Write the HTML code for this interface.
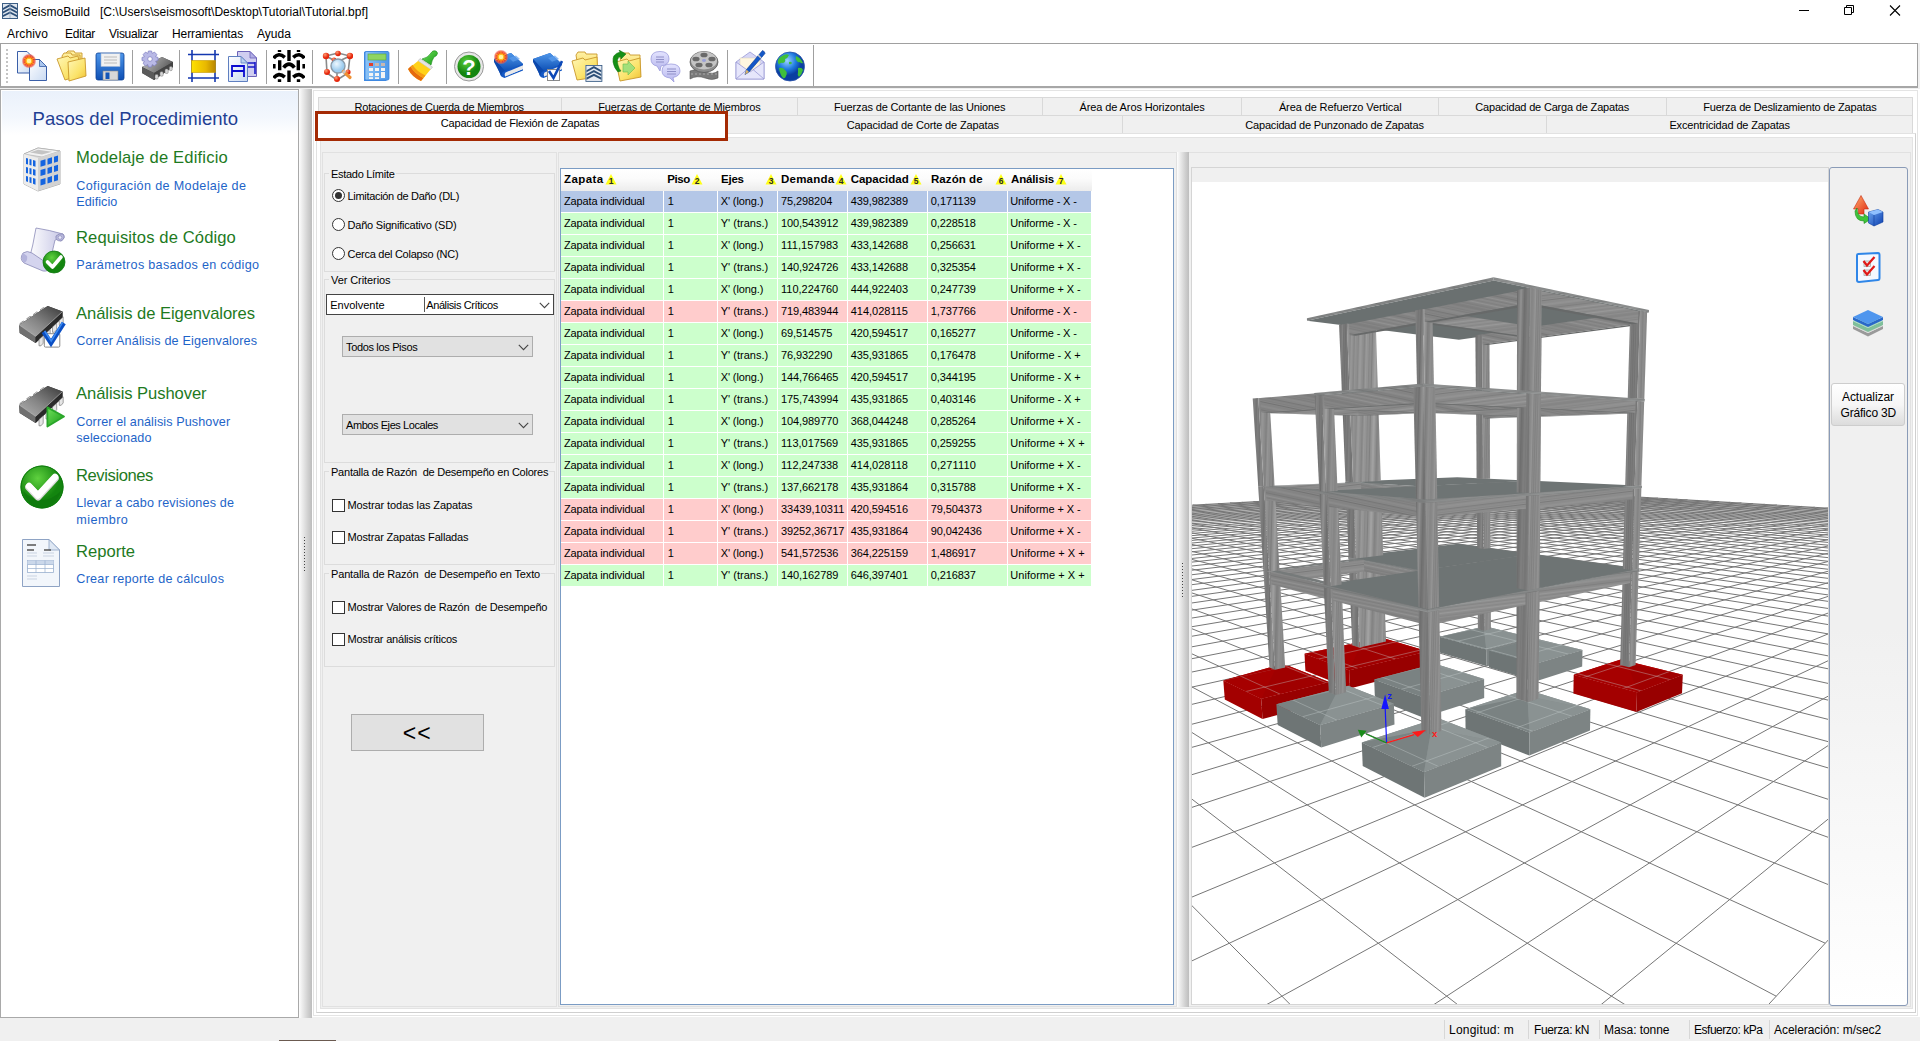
<!DOCTYPE html>
<html lang="es">
<head>
<meta charset="utf-8">
<title>SeismoBuild</title>
<style>
*{box-sizing:border-box;margin:0;padding:0}
html,body{width:1920px;height:1041px;overflow:hidden;background:#f0f0f0}
body{position:relative;font-family:"Liberation Sans",sans-serif;font-size:11px;color:#000}
.abs{position:absolute}
.t{position:absolute;white-space:nowrap;line-height:1}
/* title + menu */
#title{left:0;top:0;width:1920px;height:22px;background:#fff}
#menu{left:0;top:22px;width:1920px;height:21px;background:#fff}
.tt{font-size:12px;top:6px}
.mi{font-size:12px;top:5.5px}
/* toolbar */
#tb{left:0;top:43px;width:1918px;height:45px;background:#fff;border:1px solid #a0a0a0;border-bottom:2px solid #a7a7a7}
.sep{position:absolute;top:6px;width:1px;height:34px;background:#a0a0a0}
/* left panel */
#lp{left:0;top:89px;width:299px;height:929px;background:#fff;border:1px solid #a9a9a9}
#lphead{left:1px;top:1px;width:296px;height:44px;background:linear-gradient(180deg,#eaf1fb 0%,#f3f7fd 60%,#ffffff 100%)}
.h1{font-size:18.5px;color:#1f3f93;left:32px}
.st{font-size:16.6px;color:#1e7a1e;left:76px}
.ss{font-size:12.6px;color:#1e64c8;left:76px;letter-spacing:.35px}
/* splitters */
.spl{background:linear-gradient(90deg,#fdfdfd 0%,#e6e6e6 35%,#cfcfcf 70%,#bdbdbd 100%)}
/* tabs */
.tab{position:absolute;height:18px;border:1px solid #d9d9d9;border-bottom:none;background:#f0f0f0;text-align:center;font-size:11px;line-height:17px;white-space:nowrap}
.gb{position:absolute;border:1px solid #dcdcdc}
.gbl{position:absolute;background:#f0f0f0;padding:0 2px;white-space:nowrap;line-height:1;font-size:11px}
.rad{position:absolute;width:13px;height:13px;border:1px solid #333;border-radius:50%;background:#fff}
.rad.on:after{content:"";position:absolute;left:2px;top:2px;width:7px;height:7px;border-radius:50%;background:#333}
.chk{position:absolute;width:13px;height:13px;border:1px solid #333;background:#fff}
.combo{position:absolute;border:1px solid #adadad;background:#e1e1e1;font-size:11px;line-height:19px;padding-left:3px;white-space:nowrap}
.chev{position:absolute;right:5px;top:5px;width:10px;height:8px}
/* table */
#grid{left:560px;top:168px;width:614px;height:837px;background:#fff;border:1px solid #7f9db9}
.row{position:absolute;left:1px;height:22px;width:530px}
.c{position:absolute;top:0;height:21px;line-height:21px;font-size:11px;white-space:nowrap;padding-left:3px;overflow:hidden}
.g .c{background:#ccffcc}.r .c{background:#ffcccc}.b .c{background:#b4c7e7}
.hd .c{background:none;font-weight:bold;font-size:11.5px;line-height:22px}
.c1{left:0;width:102px}.c2{left:103px;width:53px}.c3{left:157px;width:59px}.c4{left:217px;width:69px}.c5{left:287px;width:79px}.c6{left:367px;width:79px}.c7{left:447px;width:83px}
.srt{position:absolute;top:6px;width:0;height:0;border-left:6px solid transparent;border-right:6px solid transparent;border-bottom:11px solid #ffff33}
.srn{position:absolute;top:7px;font-size:9px;font-weight:bold;line-height:10px;color:#333}
/* status */
.sbsep{position:absolute;top:1021px;width:1px;height:18px;background:#d0d0d0}
.sbt{font-size:12px;top:1024px}
</style>
</head>
<body>
<!-- TITLE BAR -->
<div id="title" class="abs">
<svg class="abs" style="left:2px;top:3px" width="16" height="16" viewBox="0 0 16 16"><rect x="0" y="0" width="16" height="16" fill="#dfe6ee"/><rect x=".5" y=".5" width="15" height="15" fill="none" stroke="#3d5f86"/><path d="M1 5 L8 1 L15 5 V7 L8 3.2 L1 7Z M1 8.5 L8 4.8 L15 8.5 V10.5 L8 6.8 L1 10.5Z M1 12 L8 8.4 L15 12 V14 L8 10.4 L1 14Z" fill="#2d4f78"/><path d="M8 1 V15" stroke="#8fa6c0" stroke-width=".8"/></svg>
<span class="t tt" style="left:23px;letter-spacing:.02px">SeismoBuild &nbsp;&nbsp;[C:\Users\seismosoft\Desktop\Tutorial\Tutorial.bpf]</span>
<svg class="abs" style="left:1790px;top:0" width="130" height="22" viewBox="0 0 130 22" fill="none" stroke="#000" stroke-width="1"><path d="M9 10.5 H19"/><path d="M54.5 7.5 H61.5 V14.5 H54.5Z M56.5 7.5 V5.5 H63.5 V12.5 H61.5"/><path d="M100 5.5 L110 15.5 M110 5.5 L100 15.5" stroke-width="1.1"/></svg>
</div>
<!-- MENU -->
<div id="menu" class="abs">
<span class="t mi" style="left:7px;letter-spacing:.14px">Archivo</span>
<span class="t mi" style="left:65px;letter-spacing:-.2px">Editar</span>
<span class="t mi" style="left:109px;letter-spacing:-.28px">Visualizar</span>
<span class="t mi" style="left:172px;letter-spacing:-.08px">Herramientas</span>
<span class="t mi" style="left:257px;letter-spacing:.04px">Ayuda</span>
</div>
<!-- TOOLBAR -->
<div id="tb" class="abs">
<div class="abs" style="left:5px;top:5px;width:2px;height:34px;background:repeating-linear-gradient(180deg,#c4c4c4 0 2px,#fff 2px 4px)"></div>
<div class="sep" style="left:131px"></div><div class="sep" style="left:178px"></div><div class="sep" style="left:265px"></div><div class="sep" style="left:311px"></div><div class="sep" style="left:397px"></div><div class="sep" style="left:445px"></div><div class="sep" style="left:726px"></div>
<div class="abs" style="left:812px;top:1px;width:1px;height:41px;background:#a0a0a0"></div>
<!--ICONS-START--><svg width="0" height="0" style="position:absolute"><defs>
<linearGradient id="gFold" x1="0" y1="0" x2="1" y2="1"><stop offset="0" stop-color="#fff7b8"/><stop offset=".6" stop-color="#fbe36a"/><stop offset="1" stop-color="#efc030"/></linearGradient>
<linearGradient id="gFold2" x1="0" y1="0" x2="0" y2="1"><stop offset="0" stop-color="#fff2a6"/><stop offset="1" stop-color="#f5cf48"/></linearGradient>
<linearGradient id="gPage" x1="0" y1="0" x2="1" y2="1"><stop offset="0" stop-color="#ffffff"/><stop offset="1" stop-color="#c9daf2"/></linearGradient>
<linearGradient id="gBlue" x1="0" y1="0" x2="0" y2="1"><stop offset="0" stop-color="#4f97ea"/><stop offset="1" stop-color="#0d4fb4"/></linearGradient>
<linearGradient id="gChip" x1="0" y1="0" x2="1" y2="0.4"><stop offset="0" stop-color="#c4c4c4"/><stop offset=".55" stop-color="#8e8e8e"/><stop offset="1" stop-color="#5c5c5c"/></linearGradient>
<linearGradient id="gGold" x1="0" y1="0" x2="1" y2="0"><stop offset="0" stop-color="#ffe100"/><stop offset=".6" stop-color="#e8b800"/><stop offset="1" stop-color="#b88600"/></linearGradient>
<radialGradient id="gStar"><stop offset="0" stop-color="#ff5a2a"/><stop offset=".55" stop-color="#f2331c"/><stop offset=".8" stop-color="#f04a3a" stop-opacity=".75"/><stop offset="1" stop-color="#f0786a" stop-opacity="0"/></radialGradient>
<radialGradient id="gBall" cx=".35" cy=".3"><stop offset="0" stop-color="#ff9a70"/><stop offset="1" stop-color="#e5260c"/></radialGradient>
<radialGradient id="gLens" cx=".4" cy=".35"><stop offset="0" stop-color="#eef8ff"/><stop offset="1" stop-color="#9ccbee"/></radialGradient>
<radialGradient id="gGreen" cx=".4" cy=".3"><stop offset="0" stop-color="#5fd13f"/><stop offset="1" stop-color="#13850f"/></radialGradient>
<radialGradient id="gGlobe" cx=".4" cy=".3"><stop offset="0" stop-color="#9fd4ff"/><stop offset=".6" stop-color="#1f7be0"/><stop offset="1" stop-color="#0a3fa0"/></radialGradient>
<linearGradient id="gCalc" x1="0" y1="0" x2="1" y2="0"><stop offset="0" stop-color="#8cc4f7"/><stop offset="1" stop-color="#4e98ea"/></linearGradient>
<linearGradient id="gBub" x1="0" y1="0" x2="0" y2="1"><stop offset="0" stop-color="#e4e4ff"/><stop offset="1" stop-color="#b4b4ec"/></linearGradient>
<linearGradient id="gGrn2" x1="0" y1="0" x2="1" y2="1"><stop offset="0" stop-color="#6fe05a"/><stop offset="1" stop-color="#179a17"/></linearGradient>
</defs></svg>
<svg class="abs" style="left:15px;top:6px" width="32" height="32" viewBox="0 0 32 32"><path d="M1.5 1.5 H11 L17 7.5 V23 H1.5Z" fill="url(#gPage)" stroke="#3a5fa8"/><path d="M13.5 9.5 H23.5 L30.5 16.5 V30.5 H13.5Z" fill="url(#gPage)" stroke="#3a5fa8"/><path d="M23.5 9.5 V16.5 H30.5Z" fill="#a9c6ee" stroke="#3a5fa8" stroke-width=".8"/><circle cx="13" cy="11" r="7.5" fill="url(#gStar)"/><polygon points="13.00,4.10 13.70,8.39 15.93,5.93 14.91,9.09 18.98,7.55 15.61,10.30 18.85,11.00 15.61,11.70 18.98,14.45 14.91,12.91 15.93,16.07 13.70,13.61 13.00,17.90 12.30,13.61 10.08,16.07 11.09,12.91 7.02,14.45 10.39,11.70 7.15,11.00 10.39,10.30 7.02,7.55 11.09,9.09 10.07,5.93 12.30,8.39" fill="#ffc21a"/><circle cx="13" cy="11" r="2.25" fill="#fff4a0"/></svg>
<svg class="abs" style="left:55px;top:6px" width="32" height="32" viewBox="0 0 32 32"><path d="M10 3 L12 1 H18 L19 3 H26 V20 H12Z" fill="url(#gFold2)" stroke="#c9972a" stroke-width=".9"/><path d="M6 6 L8 3 H15 L16 5 H24 V22 H9Z" fill="url(#gFold2)" stroke="#c9972a" stroke-width=".9"/><path d="M1 9 L12 6 L14 8 L22 6 L26 25 L9 30Z" fill="url(#gFold)" stroke="#c9972a" stroke-width=".9"/><path d="M12 12 L29 8 L30 26 L13 31Z" fill="url(#gFold)" stroke="#c9972a" stroke-width=".9"/></svg>
<svg class="abs" style="left:93px;top:6px" width="32" height="32" viewBox="0 0 32 32"><path d="M2 5 Q2 3 4 3 H28 Q30 3 30 5 V28 Q30 30 28 30 H4 Q2 30 2 28Z" fill="url(#gBlue)" stroke="#0b3f94" stroke-width=".8"/><rect x="7" y="3.5" width="19" height="13" fill="#f1f1f1" stroke="#9fb4d6" stroke-width=".6"/><path d="M10 7 H23 M10 10 H23 M10 13 H23" stroke="#bcbcbc" stroke-width="1.2"/><rect x="9" y="21" width="15" height="9" fill="#d8d8d8" stroke="#8a8a8a" stroke-width=".6"/><rect x="11.5" y="22.5" width="4" height="6.5" fill="#1456b8"/></svg>
<svg class="abs" style="left:140px;top:6px" width="32" height="32" viewBox="0 0 32 32"><path d="M1 17 L21 7 L32 12 L32 17 L13 30 L1 23Z" fill="#4a4a4a"/><path d="M1 17 L21 7 L32 12 L13 23Z" fill="url(#gChip)"/><path d="M13 23 L32 12 V17 L13 30Z" fill="#444"/><path d="M1 17 L13 23 V30 L1 23Z" fill="#5a5a5a"/><g fill="#d6d6d6" stroke="#777" stroke-width=".5"><rect x="14" y="24.5" width="3.2" height="4.5" rx="1.2"/><rect x="19" y="21.7" width="3.2" height="4.5" rx="1.2"/><rect x="24" y="19" width="3.2" height="4.5" rx="1.2"/><rect x="28.4" y="16.5" width="2.8" height="4.2" rx="1.2"/></g><g transform="translate(9,9)"><path d="M-1.6 -8 H1.6 L2.2 -5.6 L4.5 -6.9 L6.9 -4.5 L5.6 -2.2 L8 -1.6 V1.6 L5.6 2.2 L6.9 4.5 L4.5 6.9 L2.2 5.6 L1.6 8 H-1.6 L-2.2 5.6 L-4.5 6.9 L-6.9 4.5 L-5.6 2.2 L-8 1.6 V-1.6 L-5.6 -2.2 L-6.9 -4.5 L-4.5 -6.9 L-2.2 -5.6Z" fill="#b9b9e6" stroke="#7c7cc0" stroke-width=".7"/><circle r="2.3" fill="#fff" stroke="#7c7cc0" stroke-width=".7"/></g></svg>
<svg class="abs" style="left:187px;top:6px" width="32" height="32" viewBox="0 0 32 32"><path d="M4 0 V32 M27 0 V32 M0 4.5 H31 M0 28 H31" stroke="#1438b0" stroke-width="1.6" fill="none"/><rect x="3.5" y="10.5" width="24" height="12" fill="url(#gGold)" stroke="#c79a00" stroke-width=".6"/></svg>
<svg class="abs" style="left:226px;top:6px" width="32" height="32" viewBox="0 0 32 32"><path d="M10.5 1.5 H23 L29.5 8 V26.5 H10.5Z" fill="#cfcdf0" stroke="#6d63b8"/><path d="M23 1.5 V8 H29.5Z" fill="#b1aee6" stroke="#6d63b8" stroke-width=".8"/><path d="M20 12 V24 M28 12 V24 M20 13 H28 M20 17 H28" stroke="#1a1ac8" stroke-width="1.6" fill="none"/><path d="M1.5 6.5 H14 L20.5 13 V31.5 H1.5Z" fill="url(#gPage)" stroke="#5f7fc0"/><path d="M14 6.5 V13 H20.5Z" fill="#b7cff0" stroke="#5f7fc0" stroke-width=".8"/><path d="M5 15 V27 M17 15 V27 M5 16 H17 M5 21 H17" stroke="#0a0ad0" stroke-width="1.8" fill="none"/></svg>
<svg class="abs" style="left:272px;top:6px" width="32" height="32" viewBox="0 0 32 32"><g fill="none" stroke="#000" stroke-width="3.4"><path d="M16 0 V11 M16 20.5 V32 M6.7 10.3 V20.2 M25.3 10.3 V20.2"/><path d="M6.5 0 V2.1 M25.5 0 V2.1 M6.5 29.3 V32 M25.5 29.3 V32"/><path d="M0.6 8.2 Q5.5 1.8 11.8 7.4 M20.2 7.4 Q26.5 1.8 31.4 8.2 M10.6 17.6 Q16 10.6 21.4 17.6 M0.6 28 Q5.5 21.6 11.8 27.2 M20.2 27.2 Q26.5 21.6 31.4 28" stroke-width="3.6"/><path d="M1.3 14 V18.6 M30.7 14 V18.6" stroke-width="2.6"/></g></svg>
<svg class="abs" style="left:320px;top:6px" width="32" height="32" viewBox="0 0 32 32"><g stroke="#8a8a8a" stroke-width="1.6" fill="none"><path d="M5 6 L17 3 L29 6 L27 23 L16 30 L6 23Z M5 6 L16 12 L29 6 M16 12 V30"/></g><g fill="url(#gBall)"><circle cx="5" cy="6" r="3.2"/><circle cx="17" cy="3.5" r="2.8"/><circle cx="29" cy="6" r="3.2"/><circle cx="6" cy="22" r="3"/><circle cx="27" cy="22" r="2.6"/><circle cx="16" cy="29" r="3"/><circle cx="13" cy="10" r="2.4"/></g><circle cx="17" cy="16" r="7" fill="url(#gLens)" stroke="#8b9aa8" stroke-width="1.4"/><path d="M22.5 21.5 L29 27.5" stroke="#f09030" stroke-width="3.2" stroke-linecap="round"/><path d="M22 21 L24 23" stroke="#c8c8c8" stroke-width="3.2"/></svg>
<svg class="abs" style="left:359px;top:6px" width="32" height="32" viewBox="0 0 32 32"><path d="M4 2 L6 1 H28 V29 L26 31 H4Z" fill="#3f8be4"/><rect x="5" y="1.5" width="24" height="28.5" rx="1.5" fill="url(#gCalc)" stroke="#3f86dc" stroke-width=".8"/><rect x="8" y="4" width="18" height="6" fill="#8fd562" stroke="#5aa838" stroke-width=".6"/><g fill="#f4f4f4"><rect x="9" y="13" width="4" height="3" fill="#e0402c"/><rect x="15" y="13" width="4" height="3" fill="#c8b8b0"/><rect x="21" y="13" width="4" height="3" fill="#c8b8b0"/><rect x="9" y="18" width="4" height="3"/><rect x="15" y="18" width="4" height="3"/><rect x="21" y="18" width="4" height="3"/><rect x="9" y="23" width="4" height="3"/><rect x="15" y="23" width="4" height="3"/><rect x="21" y="22" width="4" height="6"/><rect x="9" y="27.2" width="4" height="1.8"/><rect x="15" y="27.2" width="4" height="1.8"/></g></svg>
<svg class="abs" style="left:406px;top:6px" width="32" height="32" viewBox="0 0 32 32"><path d="M26 1 Q30 0 30.5 3.5 Q30 6 27 7 Q25 10 24 15 L15 9 Q21 8 24 3 Q25 1.5 26 1Z" fill="url(#gGrn2)" stroke="#138a13" stroke-width=".6"/><path d="M13 8.5 L25.5 17 L23.5 19.5 L11 11Z" fill="#e4e4e4" stroke="#a8a8a8" stroke-width=".5"/><path d="M11 11 L23.5 19.5 L14 31 Q5 27 1 19Z" fill="#ffd21a"/><path d="M1 19 L3.5 16.5 Q8 24 16.5 28 L14 31 Q5 27 1 19Z" fill="#e56a10"/><path d="M3.5 16.5 L5.5 14.8 Q10 22 18.5 25.5 L16.5 28 Q8 24 3.5 16.5Z" fill="#f59a14"/></svg>
<svg class="abs" style="left:452px;top:6px" width="32" height="32" viewBox="0 0 32 32"><circle cx="16" cy="16.5" r="14.5" fill="#e6e6e6" stroke="#9a9a9a" stroke-width="1"/><circle cx="16" cy="16.5" r="11.5" fill="url(#gGreen)"/><text x="16" y="24.5" text-anchor="middle" font-family="Liberation Sans, sans-serif" font-weight="bold" font-size="22" fill="#fff">?</text></svg>
<svg class="abs" style="left:491px;top:6px" width="32" height="32" viewBox="0 0 32 32"><path d="M2 9 L19 3 L31 14 L31 17 L13 27 L9 26Z" fill="#0f52c0"/><path d="M2 9 L19 3 L31 14 L13 21Z" fill="url(#gBlue)"/><path d="M13 21 L31 14 V15 L14 22.5 Q11.5 24 13 26.5 L31 19 V20.5 L12.5 28 Q7 27 9 21Z" fill="#1458c4"/><path d="M13.5 22.5 L31 15.2 V19 L13.2 26.4 Q12 24 13.5 22.5Z" fill="#e9e9e9"/><path d="M2 9 L13 21 Q9 22 9.5 26 L2 12Z" fill="#0c48ac"/><path d="M17 8 L24 5.5 L28 9 L21 11.8Z" fill="#5fa0ee" opacity=".7"/><circle cx="9" cy="7" r="7.5" fill="url(#gStar)"/><polygon points="9.00,0.10 9.70,4.39 11.93,1.93 10.91,5.09 14.98,3.55 11.61,6.30 14.85,7.00 11.61,7.70 14.98,10.45 10.91,8.91 11.93,12.07 9.70,9.61 9.00,13.90 8.30,9.61 6.08,12.07 7.09,8.91 3.02,10.45 6.39,7.70 3.15,7.00 6.39,6.30 3.02,3.55 7.09,5.09 6.07,1.93 8.30,4.39" fill="#ffc21a"/><circle cx="9" cy="7" r="2.25" fill="#fff4a0"/></svg>
<svg class="abs" style="left:530px;top:6px" width="32" height="32" viewBox="0 0 32 32"><path d="M2 9 L19 3 L31 14 L31 17 L13 27 L9 26Z" fill="#0f52c0"/><path d="M2 9 L19 3 L31 14 L13 21Z" fill="url(#gBlue)"/><path d="M13 21 L31 14 V15 L14 22.5 Q11.5 24 13 26.5 L31 19 V20.5 L12.5 28 Q7 27 9 21Z" fill="#1458c4"/><path d="M13.5 22.5 L31 15.2 V19 L13.2 26.4 Q12 24 13.5 22.5Z" fill="#e9e9e9"/><path d="M2 9 L13 21 Q9 22 9.5 26 L2 12Z" fill="#0c48ac"/><path d="M17 8 L24 5.5 L28 9 L21 11.8Z" fill="#5fa0ee" opacity=".7"/><rect x="16.5" y="19.5" width="12" height="11" fill="#fff" stroke="#8a8a8a"/><path d="M18 21 L22.5 28 L31 11" stroke="#0d49b8" stroke-width="2.6" fill="none"/></svg>
<svg class="abs" style="left:570px;top:6px" width="32" height="32" viewBox="0 0 32 32"><path d="M5 5 L7 2 H14 L15 4 H26 V24 H8Z" fill="url(#gFold2)" stroke="#c9972a" stroke-width=".9"/><path d="M1 11 L12 8 L14 10 L26 7 L27 27 L6 30Z" fill="url(#gFold)" stroke="#c9972a" stroke-width=".9"/><g transform="translate(14.5,15) scale(1.05)"><rect x="0" y="0" width="16" height="16" fill="#e6ebf2"/><rect x=".4" y=".4" width="15.2" height="15.2" fill="none" stroke="#365a84" stroke-width=".8"/><path d="M1 5 L8 1 L15 5 V7 L8 3.2 L1 7Z M1 8.5 L8 4.8 L15 8.5 V10.5 L8 6.8 L1 10.5Z M1 12 L8 8.4 L15 12 V14 L8 10.4 L1 14Z" fill="#2d4f78"/></g></svg>
<svg class="abs" style="left:610px;top:6px" width="32" height="32" viewBox="0 0 32 32"><path d="M9 6 L11 3 H18 L19 5 H29 V25 H11Z" fill="url(#gFold2)" stroke="#c9972a" stroke-width=".9"/><path d="M5 12 L16 9 L18 11 L29 8 L30 27 L9 31Z" fill="url(#gFold)" stroke="#c9972a" stroke-width=".9"/><path d="M12 14 L17 14 V11 L24 18 L17 25 V22 H12Z" fill="#9adf7a" stroke="#5db848" stroke-width=".6" opacity=".9"/><path d="M2 12 Q1 4 9 2 L8 0 L15 4 L10 9 L9.5 6.5 Q5 8 7 15 Q8 19 10 21 L7 22 Q3 18 2 12Z" fill="#169016" stroke="#0e6e0e" stroke-width=".5"/></svg>
<svg class="abs" style="left:648px;top:6px" width="32" height="32" viewBox="0 0 32 32"><path d="M2 9 Q2 1.5 11 1.5 Q20 1.5 20 9 Q20 15 12 16 L11 21 L8 16 Q2 15 2 9Z" fill="url(#gBub)" stroke="#9c9cdc" stroke-width=".8"/><path d="M7 7 H15 M7 9.5 H15 M7 12 H15" stroke="#9090c8" stroke-width="1"/><path d="M13 21 Q13 14 22 14 Q31 14 31 21 Q31 26 24 27.5 L25 32 L21 28 Q13 27 13 21Z" fill="url(#gBub)" stroke="#9c9cdc" stroke-width=".8"/><path d="M18 19 H27 M18 21.5 H27 M18 24 H27" stroke="#9090c8" stroke-width="1"/></svg>
<svg class="abs" style="left:687px;top:6px" width="32" height="32" viewBox="0 0 32 32"><path d="M2 21 Q10 18 18 22 Q25 25 30 21 L30 28 Q24 31 17 28 Q9 25 2 29Z" fill="#7a7a7a" stroke="#555" stroke-width=".6"/><path d="M3 24 L29 24" stroke="#aaa" stroke-width="1" stroke-dasharray="2 2"/><ellipse cx="16" cy="12" rx="14" ry="10.5" fill="#8d8d8d" stroke="#5a5a5a" stroke-width=".8"/><ellipse cx="16" cy="10.5" rx="13" ry="9" fill="#c4c4c4"/><g fill="#6a6a6a"><ellipse cx="16" cy="5" rx="3.6" ry="2.3"/><ellipse cx="8" cy="9" rx="3.6" ry="2.3"/><ellipse cx="24" cy="9" rx="3.6" ry="2.3"/><ellipse cx="11" cy="15" rx="3.6" ry="2.3"/><ellipse cx="21" cy="15" rx="3.6" ry="2.3"/></g><ellipse cx="16" cy="10.5" rx="2" ry="1.4" fill="#9aa0d8"/></svg>
<svg class="abs" style="left:733px;top:6px" width="32" height="32" viewBox="0 0 32 32"><path d="M2 12 L16 2 L30 12 V29 H2Z" fill="#d6d6f6" stroke="#9a9ad6" stroke-width=".8"/><rect x="6" y="8" width="20" height="14" fill="#fff7e0" stroke="#d8d0b8" stroke-width=".5"/><path d="M2 12 L16 22 L30 12 V29 H2Z" fill="#e6e6fb" stroke="#9a9ad6" stroke-width=".8"/><path d="M2 29 L13 19.5 M30 29 L19 19.5" stroke="#9a9ad6" stroke-width=".8"/><path d="M28.5 0.5 Q31 1.5 31 3.5 L15 22 L11 24.5 L12.5 19.5Z" fill="#1458c8" stroke="#0a3a90" stroke-width=".6"/><path d="M12.5 19.5 L15 22 L11 24.5Z" fill="#d9b26a"/><path d="M24 5 L27 8" stroke="#c8c8c8" stroke-width="1.6"/></svg>
<svg class="abs" style="left:773px;top:6px" width="32" height="32" viewBox="0 0 32 32"><circle cx="16" cy="16.5" r="14.5" fill="url(#gGlobe)" stroke="#2850a8" stroke-width=".8"/><path d="M8 6 Q12 3 15 5 Q14 8 11 9 Q12 12 9 13 Q6 12 5 15 Q3 12 4 10 Q5 7 8 6Z M5 18 Q9 17 11 20 Q14 22 12 26 Q11 29 9 28 Q6 25 5 18Z M22 6 Q27 8 29 13 Q27 14 26 12 Q24 13 23 11 Q21 10 22 6Z M24 18 Q28 17 29 20 Q28 24 25 27 Q23 25 24 22Z M15 12 Q17 11 18 13 Q17 15 15 14Z" fill="#3fbf3a"/></svg><!--ICONS-END-->
</div>
<!-- LEFT PANEL -->
<div id="lp" class="abs"><div id="lphead" class="abs"></div></div>
<span class="t h1" style="left:32.5px;top:110.2px;letter-spacing:0.04px">Pasos del Procedimiento</span>
<span class="t st" style="left:76px;top:149.8px;letter-spacing:0.17px">Modelaje de Edificio</span>
<span class="t ss" style="left:76.3px;top:179.5px;letter-spacing:0.36px">Cofiguración de Modelaje de</span>
<span class="t ss" style="left:76.3px;top:196.0px;letter-spacing:0.05px">Edificio</span>
<span class="t st" style="left:76px;top:229.8px;letter-spacing:0.11px">Requisitos de Código</span>
<span class="t ss" style="left:76.3px;top:258.8px;letter-spacing:0.31px">Parámetros basados en código</span>
<span class="t st" style="left:76px;top:305.5px;letter-spacing:-0.08px">Análisis de Eigenvalores</span>
<span class="t ss" style="left:76.3px;top:335.2px;letter-spacing:0.17px">Correr Análisis de Eigenvalores</span>
<span class="t st" style="left:76px;top:385.8px;letter-spacing:-0.08px">Análisis Pushover</span>
<span class="t ss" style="left:76.3px;top:415.5px;letter-spacing:0.10px">Correr el análisis Pushover</span>
<span class="t ss" style="left:76.3px;top:432.2px;letter-spacing:0.15px">seleccionado</span>
<span class="t st" style="left:76px;top:467.8px;letter-spacing:-0.42px">Revisiones</span>
<span class="t ss" style="left:76.3px;top:497.2px;letter-spacing:0.17px">Llevar a cabo revisiones de</span>
<span class="t ss" style="left:76.3px;top:514.2px;letter-spacing:0.43px">miembro</span>
<span class="t st" style="left:76px;top:543.6px;letter-spacing:-0.01px">Reporte</span>
<span class="t ss" style="left:76.3px;top:573.2px;letter-spacing:0.26px">Crear reporte de cálculos</span>
<svg class="abs" style="left:22px;top:146px" width="40" height="46" viewBox="0 0 40 46"><path d="M2 8 L16 2 L38 5 L38 38 L16 45 L2 38Z" fill="#d9d9d9" stroke="#9a9a9a" stroke-width=".8"/><path d="M2 8 L16 2 L38 5 L20 11Z" fill="#f2f2f2" stroke="#aaa" stroke-width=".6"/><path d="M8 6.5 L16 3.8 L30 5.7 L20 8.5Z" fill="#c4c4c4"/><path d="M2 8 L16 12 V45 L2 38Z" fill="#ececec"/><path d="M16 12 L38 5 V38 L16 45Z" fill="#d2d2d2"/><g fill="#1464e0"><path d="M4 12 l2 .6 v6 l-2 -.7z M7.5 13 l2 .6 v6 l-2 -.7z M11 14 l2.5 .7 v6 l-2.5 -.8z"/><path d="M4 21 l2 .6 v6 l-2 -.7z M7.5 22 l2 .6 v6 l-2 -.7z M11 23 l2.500 .7 v6 l-2.500 -.8z"/><path d="M4 30 l2 .6 v5.5 l-2 -.9z M7.5 31 l2 .6 v5.700 l-2 -.9z M11 32 l2.500 .7 v6 l-2.500 -1z"/><path d="M18.500 14.800 l5 -1.500 v6 l-5 1.500z M25.500 12.700 l4.500 -1.400 v6 l-4.500 1.400z M32 10.800 l4 -1.200 v6 l-4 1.200z"/><path d="M18.500 24 l5 -1.500 v6 l-5 1.500z M25.500 22 l4.500 -1.400 v6 l-4.500 1.400z M32 20 l4 -1.200 v6 l-4 1.200z"/><path d="M18.500 33.500 l5 -1.500 v6 l-5 1.500z M25.500 31.500 l4.500 -1.400 v6 l-4.500 1.400z M32 29.500 l4 -1.200 v6 l-4 1.200z"/></g></svg>
<svg class="abs" style="left:19px;top:226px" width="48" height="48" viewBox="0 0 48 48"><defs><linearGradient id="gScr" x1="0" y1="0" x2="1" y2="0"><stop offset="0" stop-color="#ffffff"/><stop offset="1" stop-color="#c4c4e4"/></linearGradient></defs><path d="M17 2 Q30 4 44 8 Q47 12 42 15 Q38 12 36 14 L30 40 Q20 36 10 34 Q14 20 17 2Z" fill="url(#gScr)" stroke="#8a8ab8" stroke-width=".8"/><path d="M44 8 Q47 12 42 15 Q36 15 37 10 Q40 7 44 8Z" fill="#b8b8dc" stroke="#8a8ab8" stroke-width=".8"/><circle cx="41" cy="11.500" r="1.800" fill="#e8e8f8" stroke="#8a8ab8" stroke-width=".6"/><path d="M4 27 Q8 24 13 27 L32 40 Q30 46 24 45 L5 37 Q0 33 4 27Z" fill="#d4d4ee" stroke="#8a8ab8" stroke-width=".8"/><path d="M4 27 Q1 32 5 37 Q9 35 8 30Z" fill="#b4b4dc"/><circle cx="35" cy="36" r="11" fill="url(#gGreen)" stroke="#0f7a0f" stroke-width=".8"/><path d="M28.500 36 L33.500 41 L42 31" stroke="#fff" stroke-width="3.600" fill="none" stroke-linecap="round" stroke-linejoin="round"/></svg>
<svg class="abs" style="left:19px;top:306px" width="47" height="43" viewBox="0 0 47 43"><defs><linearGradient id="gChipT" x1="0" y1="1" x2="1" y2="0"><stop offset="0" stop-color="#b4b4b4"/><stop offset=".45" stop-color="#858585"/><stop offset="1" stop-color="#3a3a3a"/></linearGradient></defs><g fill="#cfcfcf" stroke="#6f6f6f" stroke-width=".6"><path d="M0.800 17.500 l3.400 -2.500 l1.800 .9 l-3.400 2.500z M7.600 12.800 l3.400 -2.500 l1.800 .9 l-3.400 2.500z M14.300 8.400 l3.400 -2.500 l1.800 .9 l-3.400 2.500z M21 4 l3.400 -2.500 l1.800 .9 l-3.400 2.500z"/></g><path d="M0.150 18.900 L28.700 0.100 L43.500 5.500 L43.500 11.500 L16.600 37.100 L0.700 27Z" fill="#2e2e2e"/><path d="M0.150 18.900 L28.700 0.100 L43.500 5.500 L16.600 30.400Z" fill="url(#gChipT)"/><path d="M0.150 18.900 L16.600 30.400 L16.600 37.100 L0.700 27Z" fill="#707070"/><path d="M16.600 30.400 L43.500 5.500 V11.500 L16.600 37.100Z" fill="#2a2a2a"/><path d="M0.150 18.900 L16.600 30.400 L43.500 5.500" fill="none" stroke="#bdbdbd" stroke-width=".7"/><g fill="#e6e6e6" stroke="#666" stroke-width=".6"><path d="M20 33.500 l4.200 -3.800 v7.500 l-2.200 2.600 h-2 z"/><path d="M27 27.200 l4.200 -3.800 v7 l-2.200 2.600 h-2 z"/><path d="M33.500 21 l4.200 -3.800 v6.500 l-2.200 2.600 h-2 z"/><path d="M40.200 14.500 l4 -3.600 v6 l-2 2.400 h-2 z"/></g><rect x="25.300" y="27.700" width="15.500" height="13.400" rx="1.200" fill="#fff" stroke="#8a8a8a"/><path d="M24.600 25.700 L32 37.100 L44.800 16.900" stroke="#0b4fc4" stroke-width="4.600" fill="none"/><path d="M25.600 25 L32.200 35 L43.600 16.300" stroke="#3b8af0" stroke-width="1.600" fill="none"/></svg>
<svg class="abs" style="left:19px;top:386px" width="47" height="43" viewBox="0 0 47 43"><defs><linearGradient id="gChipT" x1="0" y1="1" x2="1" y2="0"><stop offset="0" stop-color="#b4b4b4"/><stop offset=".45" stop-color="#858585"/><stop offset="1" stop-color="#3a3a3a"/></linearGradient></defs><g fill="#cfcfcf" stroke="#6f6f6f" stroke-width=".6"><path d="M0.800 17.500 l3.400 -2.500 l1.800 .9 l-3.400 2.500z M7.600 12.800 l3.400 -2.500 l1.800 .9 l-3.400 2.500z M14.300 8.400 l3.400 -2.500 l1.800 .9 l-3.400 2.500z M21 4 l3.400 -2.500 l1.800 .9 l-3.400 2.500z"/></g><path d="M0.150 18.900 L28.700 0.100 L43.500 5.500 L43.500 11.500 L16.600 37.100 L0.700 27Z" fill="#2e2e2e"/><path d="M0.150 18.900 L28.700 0.100 L43.500 5.500 L16.600 30.400Z" fill="url(#gChipT)"/><path d="M0.150 18.900 L16.600 30.400 L16.600 37.100 L0.700 27Z" fill="#707070"/><path d="M16.600 30.400 L43.500 5.500 V11.500 L16.600 37.100Z" fill="#2a2a2a"/><path d="M0.150 18.900 L16.600 30.400 L43.500 5.500" fill="none" stroke="#bdbdbd" stroke-width=".7"/><g fill="#e6e6e6" stroke="#666" stroke-width=".6"><path d="M20 33.500 l4.200 -3.800 v7.500 l-2.200 2.600 h-2 z"/><path d="M27 27.200 l4.200 -3.800 v7 l-2.200 2.600 h-2 z"/><path d="M33.500 21 l4.200 -3.800 v6.500 l-2.200 2.600 h-2 z"/><path d="M40.200 14.500 l4 -3.600 v6 l-2 2.400 h-2 z"/></g><path d="M28.400 21.400 L45 30.500 L28.400 40.600Z" fill="url(#gGrn2)" stroke="#2aa62a" stroke-width="1.800" stroke-linejoin="round"/></svg>
<svg class="abs" style="left:20px;top:465px" width="44" height="44" viewBox="0 0 44 44"><circle cx="22" cy="22" r="21.500" fill="url(#gGreen)"/><circle cx="22" cy="22" r="21" fill="none" stroke="#0e7a0e" stroke-width="1"/><path d="M3 26 Q22 44 41 26 Q36 42 22 43 Q8 42 3 26Z" fill="#0c6c0c" opacity=".45"/><path d="M9 21 L18 30.500 L35 12" stroke="#d8d8d8" stroke-width="7.500" fill="none" stroke-linecap="round" stroke-linejoin="round" transform="translate(0,1.200)"/><path d="M9 21 L18 30.500 L35 12" stroke="#fff" stroke-width="6.500" fill="none" stroke-linecap="round" stroke-linejoin="round"/></svg>
<svg class="abs" style="left:22px;top:539px" width="38" height="48" viewBox="0 0 38 48"><path d="M.5 .5 H27 L37.500 11 V47.500 H.5Z" fill="#f2f6fb" stroke="#8ea3c4"/><path d="M27 .5 V11 H37.500Z" fill="#dfe8f4" stroke="#8ea3c4" stroke-width=".8"/><path d="M5 6 H14 M5 11 H12 M22 11 H29" stroke="#555" stroke-width="1.400"/><path d="M5 14 H15 M5 17 H15 M21 14 H32 M21 17 H32" stroke="#c9d3e2" stroke-width="1"/><rect x="5.500" y="21.500" width="26" height="12" fill="#fff" stroke="#9ab0cf" stroke-width=".8"/><rect x="5.500" y="21.500" width="26" height="4" fill="#cbd8ea"/><path d="M14 21.500 V33.500 M23 21.500 V33.500 M5.500 25.500 H31.500 M5.500 29.500 H31.500" stroke="#9ab0cf" stroke-width=".7"/><path d="M5 37 H15 M5 40 H15" stroke="#c9d3e2" stroke-width="1"/></svg>
<div class="abs spl" style="left:299px;top:89px;width:13px;height:929px"></div>
<div class="abs" style="left:304px;top:537px;width:1px;height:34px;background:repeating-linear-gradient(180deg,#444 0 1px,transparent 1px 3px)"></div>
<!-- MAIN FRAME + TABS -->
<div class="abs" style="left:312px;top:89px;width:1608px;height:928px;background:#fff"></div>
<div class="abs" style="left:313px;top:90px;width:1605px;height:926px;border:1px solid #e4e4e4"></div>
<div class="abs" style="left:316px;top:133px;width:1600px;height:880px;background:#fff;border:1px solid #e2e2e2;border-right-color:#cfcfcf;border-bottom-color:#cfcfcf"></div>
<div class="abs" style="left:320px;top:137px;width:1593px;height:872px;background:#f0f0f0;border:1px solid #e3e3e3"></div>
<div class="tab" style="left:318px;top:97px;width:244px"></div>
<span class="t " style="left:354.5px;top:102.2px;font-size:11px;letter-spacing:-0.21px;">Rotaciones de Cuerda de Miembros</span>
<div class="tab" style="left:561px;top:97px;width:237px"></div>
<span class="t " style="left:598.3px;top:102.2px;font-size:11px;letter-spacing:-0.15px;">Fuerzas de Cortante de Miembros</span>
<div class="tab" style="left:797px;top:97px;width:246px"></div>
<span class="t " style="left:834.0px;top:102.2px;font-size:11px;letter-spacing:-0.14px;">Fuerzas de Cortante de las Uniones</span>
<div class="tab" style="left:1042px;top:97px;width:200px"></div>
<span class="t " style="left:1079.5px;top:102.2px;font-size:11px;letter-spacing:-0.11px;">Área de Aros Horizontales</span>
<div class="tab" style="left:1241px;top:97px;width:198px"></div>
<span class="t " style="left:1278.9px;top:102.2px;font-size:11px;letter-spacing:-0.11px;">Área de Refuerzo Vertical</span>
<div class="tab" style="left:1438px;top:97px;width:229px"></div>
<span class="t " style="left:1475.3px;top:102.2px;font-size:11px;letter-spacing:-0.18px;">Capacidad de Carga de Zapatas</span>
<div class="tab" style="left:1666px;top:97px;width:247px"></div>
<span class="t " style="left:1703.2px;top:102.2px;font-size:11px;letter-spacing:-0.19px;">Fuerza de Deslizamiento de Zapatas</span>
<div class="tab" style="left:318px;top:115px;width:410px"></div>
<div class="tab" style="left:727px;top:115px;width:396px"></div>
<span class="t " style="left:846.7px;top:120.2px;font-size:11px;letter-spacing:-0.13px;">Capacidad de Corte de Zapatas</span>
<div class="tab" style="left:1122px;top:115px;width:425px"></div>
<span class="t " style="left:1245.3px;top:120.2px;font-size:11px;letter-spacing:-0.19px;">Capacidad de Punzonado de Zapatas</span>
<div class="tab" style="left:1546px;top:115px;width:367px"></div>
<span class="t " style="left:1669.4px;top:120.2px;font-size:11px;letter-spacing:-0.15px;">Excentricidad de Zapatas</span>
<div class="abs" style="left:315px;top:111px;width:413px;height:30px;background:#fff;border:3px solid #a42a04"></div>
<span class="t " style="left:440.8px;top:118.2px;font-size:11px;letter-spacing:-0.19px;">Capacidad de Flexión de Zapatas</span>
<div class="abs" style="left:322px;top:152px;width:235px;height:855px;border:1px solid #e1e1e1"></div>
<div class="abs" style="left:558px;top:152px;width:619px;height:855px;border:1px solid #e1e1e1"></div>
<div class="abs spl" style="left:1177px;top:152px;width:12px;height:855px"></div>
<div class="abs" style="left:1182px;top:563px;width:1px;height:34px;background:repeating-linear-gradient(180deg,#444 0 1px,transparent 1px 3px)"></div>
<div class="abs" style="left:1189px;top:152px;width:722px;height:855px;border:1px solid #e1e1e1;border-left:none"></div>
<!-- CONTROLS -->
<div class="gb" style="left:324px;top:173px;width:231px;height:99px"></div>
<div class="abs" style="left:329px;top:173px;width:66.5px;height:1px;background:#f0f0f0"></div>
<span class="t" style="left:331.0px;top:169.0px;font-size:11px;letter-spacing:-0.29px;">Estado Límite</span>
<div class="rad on" style="left:332px;top:189px"></div>
<span class="t" style="left:347.5px;top:191.0px;font-size:11px;letter-spacing:-0.31px;">Limitación de Daño (DL)</span>
<div class="rad" style="left:332px;top:218px"></div>
<span class="t" style="left:347.5px;top:220.0px;font-size:11px;letter-spacing:-0.21px;">Daño Significativo (SD)</span>
<div class="rad" style="left:332px;top:247px"></div>
<span class="t" style="left:347.5px;top:249.0px;font-size:11px;letter-spacing:-0.27px;">Cerca del Colapso (NC)</span>
<div class="gb" style="left:324px;top:279px;width:231px;height:184px"></div>
<div class="abs" style="left:329px;top:279px;width:62.5px;height:1px;background:#f0f0f0"></div>
<span class="t" style="left:331.0px;top:275.0px;font-size:11px;letter-spacing:-0.08px;">Ver Criterios</span>
<div class="abs" style="left:326px;top:294px;width:228px;height:21px;background:#fff;border:1px solid #444"></div>
<span class="t" style="left:330.3px;top:300.0px;font-size:11px;letter-spacing:-0.02px;">Envolvente</span>
<div class="abs" style="left:424px;top:297px;width:1px;height:15px;background:#555"></div>
<span class="t" style="left:426.2px;top:300.0px;font-size:11px;letter-spacing:-0.38px;">Análisis Críticos</span>
<svg class="abs" style="left:539px;top:301.5px" width="11" height="7" viewBox="0 0 11 7"><path d="M.8 .8 L5.5 5.600 L10.200 .8" fill="none" stroke="#444" stroke-width="1.100"/></svg>
<div class="abs" style="left:342px;top:336px;width:191px;height:21px;background:#e1e1e1;border:1px solid #adadad"></div>
<span class="t" style="left:346.0px;top:342.0px;font-size:11px;letter-spacing:-0.34px;">Todos los Pisos</span>
<svg class="abs" style="left:517.5px;top:343.5px" width="11" height="7" viewBox="0 0 11 7"><path d="M.8 .8 L5.5 5.600 L10.200 .8" fill="none" stroke="#444" stroke-width="1.100"/></svg>
<div class="abs" style="left:342px;top:414px;width:191px;height:21px;background:#e1e1e1;border:1px solid #adadad"></div>
<span class="t" style="left:346.0px;top:420.0px;font-size:11px;letter-spacing:-0.43px;">Ambos Ejes Locales</span>
<svg class="abs" style="left:517.5px;top:421.5px" width="11" height="7" viewBox="0 0 11 7"><path d="M.8 .8 L5.5 5.600 L10.200 .8" fill="none" stroke="#444" stroke-width="1.100"/></svg>
<div class="gb" style="left:324px;top:471px;width:231px;height:94px"></div>
<div class="abs" style="left:329px;top:471px;width:220.20000000000005px;height:1px;background:#f0f0f0"></div>
<span class="t" style="left:331.0px;top:467.0px;font-size:11px;letter-spacing:-0.23px;">Pantalla de Razón &nbsp;de Desempeño en Colores</span>
<div class="chk" style="left:332px;top:498.5px"></div>
<span class="t" style="left:347.5px;top:500.0px;font-size:11px;letter-spacing:-0.09px;">Mostrar todas las Zapatas</span>
<div class="chk" style="left:332px;top:530.5px"></div>
<span class="t" style="left:347.5px;top:532.0px;font-size:11px;letter-spacing:-0.16px;">Mostrar Zapatas Falladas</span>
<div class="gb" style="left:324px;top:573px;width:231px;height:94px"></div>
<div class="abs" style="left:329px;top:573px;width:211.89999999999998px;height:1px;background:#f0f0f0"></div>
<span class="t" style="left:331.0px;top:569.0px;font-size:11px;letter-spacing:-0.15px;">Pantalla de Razón &nbsp;de Desempeño en Texto</span>
<div class="chk" style="left:332px;top:600.5px"></div>
<span class="t" style="left:347.5px;top:602.0px;font-size:11px;letter-spacing:-0.21px;">Mostrar Valores de Razón &nbsp;de Desempeño</span>
<div class="chk" style="left:332px;top:632.5px"></div>
<span class="t" style="left:347.5px;top:634.0px;font-size:11px;letter-spacing:-0.21px;">Mostrar análisis críticos</span>
<div class="abs" style="left:351px;top:714px;width:133px;height:37px;background:#e1e1e1;border:1px solid #adadad"></div>
<span class="t" style="left:402.8px;top:722px;font-size:23px;letter-spacing:1px">&lt;&lt;</span>
<!-- TABLE -->
<div class="abs" style="left:560px;top:168px;width:614px;height:837px;background:#fff;border:1px solid #7b9cc4"></div>
<div class="abs" style="left:561px;top:169px;width:531px;height:22px;background:linear-gradient(180deg,#ffffff 0%,#fbfbfb 45%,#ececec 100%)"></div>
<span class="t" style="left:564.0px;top:174px;font-size:11.5px;font-weight:bold;letter-spacing:0.41px;">Zapata</span>
<svg class="abs" style="left:605.0px;top:174px" width="12" height="11" viewBox="0 0 12 11"><path d="M6 0 L11.500 10.500 H.5Z" fill="#ffff14"/><text x="6" y="9.600" text-anchor="middle" font-family="Liberation Sans, sans-serif" font-weight="bold" font-size="8.500" fill="#2a2a2a">1</text></svg>
<span class="t" style="left:667.3px;top:174px;font-size:11.5px;font-weight:bold;letter-spacing:-0.40px;">Piso</span>
<svg class="abs" style="left:691.3px;top:174px" width="12" height="11" viewBox="0 0 12 11"><path d="M6 0 L11.500 10.500 H.5Z" fill="#ffff14"/><text x="6" y="9.600" text-anchor="middle" font-family="Liberation Sans, sans-serif" font-weight="bold" font-size="8.500" fill="#2a2a2a">2</text></svg>
<span class="t" style="left:721.0px;top:174px;font-size:11.5px;font-weight:bold;letter-spacing:-0.24px;">Ejes</span>
<svg class="abs" style="left:765.3px;top:174px" width="12" height="11" viewBox="0 0 12 11"><path d="M6 0 L11.500 10.500 H.5Z" fill="#ffff14"/><text x="6" y="9.600" text-anchor="middle" font-family="Liberation Sans, sans-serif" font-weight="bold" font-size="8.500" fill="#2a2a2a">3</text></svg>
<span class="t" style="left:781.0px;top:174px;font-size:11.5px;font-weight:bold;letter-spacing:0.22px;">Demanda</span>
<svg class="abs" style="left:835.0px;top:174px" width="12" height="11" viewBox="0 0 12 11"><path d="M6 0 L11.500 10.500 H.5Z" fill="#ffff14"/><text x="6" y="9.600" text-anchor="middle" font-family="Liberation Sans, sans-serif" font-weight="bold" font-size="8.500" fill="#2a2a2a">4</text></svg>
<span class="t" style="left:850.7px;top:174px;font-size:11.5px;font-weight:bold;letter-spacing:-0.02px;">Capacidad</span>
<svg class="abs" style="left:910.3px;top:174px" width="12" height="11" viewBox="0 0 12 11"><path d="M6 0 L11.500 10.500 H.5Z" fill="#ffff14"/><text x="6" y="9.600" text-anchor="middle" font-family="Liberation Sans, sans-serif" font-weight="bold" font-size="8.500" fill="#2a2a2a">5</text></svg>
<span class="t" style="left:931.0px;top:174px;font-size:11.5px;font-weight:bold;letter-spacing:0.07px;">Razón de</span>
<svg class="abs" style="left:995.3px;top:174px" width="12" height="11" viewBox="0 0 12 11"><path d="M6 0 L11.500 10.500 H.5Z" fill="#ffff14"/><text x="6" y="9.600" text-anchor="middle" font-family="Liberation Sans, sans-serif" font-weight="bold" font-size="8.500" fill="#2a2a2a">6</text></svg>
<span class="t" style="left:1011.0px;top:174px;font-size:11.5px;font-weight:bold;letter-spacing:-0.14px;">Análisis</span>
<svg class="abs" style="left:1055.3px;top:174px" width="12" height="11" viewBox="0 0 12 11"><path d="M6 0 L11.500 10.500 H.5Z" fill="#ffff14"/><text x="6" y="9.600" text-anchor="middle" font-family="Liberation Sans, sans-serif" font-weight="bold" font-size="8.500" fill="#2a2a2a">7</text></svg>
<div class="abs" style="left:561px;top:191px;width:102px;height:21px;background:#b4c7e7"></div>
<div class="abs" style="left:664px;top:191px;width:53px;height:21px;background:#b4c7e7"></div>
<div class="abs" style="left:718px;top:191px;width:59px;height:21px;background:#b4c7e7"></div>
<div class="abs" style="left:778px;top:191px;width:69px;height:21px;background:#b4c7e7"></div>
<div class="abs" style="left:848px;top:191px;width:79px;height:21px;background:#b4c7e7"></div>
<div class="abs" style="left:928px;top:191px;width:79px;height:21px;background:#b4c7e7"></div>
<div class="abs" style="left:1008px;top:191px;width:83px;height:21px;background:#b4c7e7"></div>
<span class="t" style="left:564.0px;top:196px;font-size:11px;letter-spacing:-0.15px;">Zapata individual</span>
<span class="t" style="left:667.7px;top:196px;font-size:11px;">1</span>
<span class="t" style="left:720.7px;top:196px;font-size:11px;letter-spacing:-0.11px;">X' (long.)</span>
<span class="t" style="left:781.0px;top:196px;font-size:11px;letter-spacing:-0.09px;">75,298204</span>
<span class="t" style="left:850.7px;top:196px;font-size:11px;letter-spacing:-0.09px;">439,982389</span>
<span class="t" style="left:930.7px;top:196px;font-size:11px;letter-spacing:0.02px;">0,171139</span>
<span class="t" style="left:1010.3px;top:196px;font-size:11px;letter-spacing:-0.15px;">Uniforme - X -</span>
<div class="abs" style="left:561px;top:213px;width:102px;height:21px;background:#ccffcc"></div>
<div class="abs" style="left:664px;top:213px;width:53px;height:21px;background:#ccffcc"></div>
<div class="abs" style="left:718px;top:213px;width:59px;height:21px;background:#ccffcc"></div>
<div class="abs" style="left:778px;top:213px;width:69px;height:21px;background:#ccffcc"></div>
<div class="abs" style="left:848px;top:213px;width:79px;height:21px;background:#ccffcc"></div>
<div class="abs" style="left:928px;top:213px;width:79px;height:21px;background:#ccffcc"></div>
<div class="abs" style="left:1008px;top:213px;width:83px;height:21px;background:#ccffcc"></div>
<span class="t" style="left:564.0px;top:218px;font-size:11px;letter-spacing:-0.15px;">Zapata individual</span>
<span class="t" style="left:667.7px;top:218px;font-size:11px;">1</span>
<span class="t" style="left:720.7px;top:218px;font-size:11px;letter-spacing:0.02px;">Y' (trans.)</span>
<span class="t" style="left:781.0px;top:218px;font-size:11px;letter-spacing:-0.09px;">100,543912</span>
<span class="t" style="left:850.7px;top:218px;font-size:11px;letter-spacing:-0.09px;">439,982389</span>
<span class="t" style="left:930.7px;top:218px;font-size:11px;letter-spacing:-0.09px;">0,228518</span>
<span class="t" style="left:1010.3px;top:218px;font-size:11px;letter-spacing:-0.15px;">Uniforme - X -</span>
<div class="abs" style="left:561px;top:235px;width:102px;height:21px;background:#ccffcc"></div>
<div class="abs" style="left:664px;top:235px;width:53px;height:21px;background:#ccffcc"></div>
<div class="abs" style="left:718px;top:235px;width:59px;height:21px;background:#ccffcc"></div>
<div class="abs" style="left:778px;top:235px;width:69px;height:21px;background:#ccffcc"></div>
<div class="abs" style="left:848px;top:235px;width:79px;height:21px;background:#ccffcc"></div>
<div class="abs" style="left:928px;top:235px;width:79px;height:21px;background:#ccffcc"></div>
<div class="abs" style="left:1008px;top:235px;width:83px;height:21px;background:#ccffcc"></div>
<span class="t" style="left:564.0px;top:240px;font-size:11px;letter-spacing:-0.15px;">Zapata individual</span>
<span class="t" style="left:667.7px;top:240px;font-size:11px;">1</span>
<span class="t" style="left:720.7px;top:240px;font-size:11px;letter-spacing:-0.11px;">X' (long.)</span>
<span class="t" style="left:781.0px;top:240px;font-size:11px;letter-spacing:0.08px;">111,157983</span>
<span class="t" style="left:850.7px;top:240px;font-size:11px;letter-spacing:-0.09px;">433,142688</span>
<span class="t" style="left:930.7px;top:240px;font-size:11px;letter-spacing:-0.09px;">0,256631</span>
<span class="t" style="left:1010.3px;top:240px;font-size:11px;letter-spacing:-0.06px;">Uniforme + X -</span>
<div class="abs" style="left:561px;top:257px;width:102px;height:21px;background:#ccffcc"></div>
<div class="abs" style="left:664px;top:257px;width:53px;height:21px;background:#ccffcc"></div>
<div class="abs" style="left:718px;top:257px;width:59px;height:21px;background:#ccffcc"></div>
<div class="abs" style="left:778px;top:257px;width:69px;height:21px;background:#ccffcc"></div>
<div class="abs" style="left:848px;top:257px;width:79px;height:21px;background:#ccffcc"></div>
<div class="abs" style="left:928px;top:257px;width:79px;height:21px;background:#ccffcc"></div>
<div class="abs" style="left:1008px;top:257px;width:83px;height:21px;background:#ccffcc"></div>
<span class="t" style="left:564.0px;top:262px;font-size:11px;letter-spacing:-0.15px;">Zapata individual</span>
<span class="t" style="left:667.7px;top:262px;font-size:11px;">1</span>
<span class="t" style="left:720.7px;top:262px;font-size:11px;letter-spacing:0.02px;">Y' (trans.)</span>
<span class="t" style="left:781.0px;top:262px;font-size:11px;letter-spacing:-0.09px;">140,924726</span>
<span class="t" style="left:850.7px;top:262px;font-size:11px;letter-spacing:-0.09px;">433,142688</span>
<span class="t" style="left:930.7px;top:262px;font-size:11px;letter-spacing:-0.09px;">0,325354</span>
<span class="t" style="left:1010.3px;top:262px;font-size:11px;letter-spacing:-0.06px;">Uniforme + X -</span>
<div class="abs" style="left:561px;top:279px;width:102px;height:21px;background:#ccffcc"></div>
<div class="abs" style="left:664px;top:279px;width:53px;height:21px;background:#ccffcc"></div>
<div class="abs" style="left:718px;top:279px;width:59px;height:21px;background:#ccffcc"></div>
<div class="abs" style="left:778px;top:279px;width:69px;height:21px;background:#ccffcc"></div>
<div class="abs" style="left:848px;top:279px;width:79px;height:21px;background:#ccffcc"></div>
<div class="abs" style="left:928px;top:279px;width:79px;height:21px;background:#ccffcc"></div>
<div class="abs" style="left:1008px;top:279px;width:83px;height:21px;background:#ccffcc"></div>
<span class="t" style="left:564.0px;top:284px;font-size:11px;letter-spacing:-0.15px;">Zapata individual</span>
<span class="t" style="left:667.7px;top:284px;font-size:11px;">1</span>
<span class="t" style="left:720.7px;top:284px;font-size:11px;letter-spacing:-0.11px;">X' (long.)</span>
<span class="t" style="left:781.0px;top:284px;font-size:11px;letter-spacing:-0.01px;">110,224760</span>
<span class="t" style="left:850.7px;top:284px;font-size:11px;letter-spacing:-0.09px;">444,922403</span>
<span class="t" style="left:930.7px;top:284px;font-size:11px;letter-spacing:-0.09px;">0,247739</span>
<span class="t" style="left:1010.3px;top:284px;font-size:11px;letter-spacing:-0.06px;">Uniforme + X -</span>
<div class="abs" style="left:561px;top:301px;width:102px;height:21px;background:#ffcccc"></div>
<div class="abs" style="left:664px;top:301px;width:53px;height:21px;background:#ffcccc"></div>
<div class="abs" style="left:718px;top:301px;width:59px;height:21px;background:#ffcccc"></div>
<div class="abs" style="left:778px;top:301px;width:69px;height:21px;background:#ffcccc"></div>
<div class="abs" style="left:848px;top:301px;width:79px;height:21px;background:#ffcccc"></div>
<div class="abs" style="left:928px;top:301px;width:79px;height:21px;background:#ffcccc"></div>
<div class="abs" style="left:1008px;top:301px;width:83px;height:21px;background:#ffcccc"></div>
<span class="t" style="left:564.0px;top:306px;font-size:11px;letter-spacing:-0.15px;">Zapata individual</span>
<span class="t" style="left:667.7px;top:306px;font-size:11px;">1</span>
<span class="t" style="left:720.7px;top:306px;font-size:11px;letter-spacing:0.02px;">Y' (trans.)</span>
<span class="t" style="left:781.0px;top:306px;font-size:11px;letter-spacing:-0.09px;">719,483944</span>
<span class="t" style="left:850.7px;top:306px;font-size:11px;letter-spacing:-0.01px;">414,028115</span>
<span class="t" style="left:930.7px;top:306px;font-size:11px;letter-spacing:-0.09px;">1,737766</span>
<span class="t" style="left:1010.3px;top:306px;font-size:11px;letter-spacing:-0.15px;">Uniforme - X -</span>
<div class="abs" style="left:561px;top:323px;width:102px;height:21px;background:#ccffcc"></div>
<div class="abs" style="left:664px;top:323px;width:53px;height:21px;background:#ccffcc"></div>
<div class="abs" style="left:718px;top:323px;width:59px;height:21px;background:#ccffcc"></div>
<div class="abs" style="left:778px;top:323px;width:69px;height:21px;background:#ccffcc"></div>
<div class="abs" style="left:848px;top:323px;width:79px;height:21px;background:#ccffcc"></div>
<div class="abs" style="left:928px;top:323px;width:79px;height:21px;background:#ccffcc"></div>
<div class="abs" style="left:1008px;top:323px;width:83px;height:21px;background:#ccffcc"></div>
<span class="t" style="left:564.0px;top:328px;font-size:11px;letter-spacing:-0.15px;">Zapata individual</span>
<span class="t" style="left:667.7px;top:328px;font-size:11px;">1</span>
<span class="t" style="left:720.7px;top:328px;font-size:11px;letter-spacing:-0.11px;">X' (long.)</span>
<span class="t" style="left:781.0px;top:328px;font-size:11px;letter-spacing:-0.09px;">69,514575</span>
<span class="t" style="left:850.7px;top:328px;font-size:11px;letter-spacing:-0.09px;">420,594517</span>
<span class="t" style="left:930.7px;top:328px;font-size:11px;letter-spacing:-0.09px;">0,165277</span>
<span class="t" style="left:1010.3px;top:328px;font-size:11px;letter-spacing:-0.15px;">Uniforme - X -</span>
<div class="abs" style="left:561px;top:345px;width:102px;height:21px;background:#ccffcc"></div>
<div class="abs" style="left:664px;top:345px;width:53px;height:21px;background:#ccffcc"></div>
<div class="abs" style="left:718px;top:345px;width:59px;height:21px;background:#ccffcc"></div>
<div class="abs" style="left:778px;top:345px;width:69px;height:21px;background:#ccffcc"></div>
<div class="abs" style="left:848px;top:345px;width:79px;height:21px;background:#ccffcc"></div>
<div class="abs" style="left:928px;top:345px;width:79px;height:21px;background:#ccffcc"></div>
<div class="abs" style="left:1008px;top:345px;width:83px;height:21px;background:#ccffcc"></div>
<span class="t" style="left:564.0px;top:350px;font-size:11px;letter-spacing:-0.15px;">Zapata individual</span>
<span class="t" style="left:667.7px;top:350px;font-size:11px;">1</span>
<span class="t" style="left:720.7px;top:350px;font-size:11px;letter-spacing:0.02px;">Y' (trans.)</span>
<span class="t" style="left:781.0px;top:350px;font-size:11px;letter-spacing:-0.09px;">76,932290</span>
<span class="t" style="left:850.7px;top:350px;font-size:11px;letter-spacing:-0.09px;">435,931865</span>
<span class="t" style="left:930.7px;top:350px;font-size:11px;letter-spacing:-0.09px;">0,176478</span>
<span class="t" style="left:1010.3px;top:350px;font-size:11px;letter-spacing:-0.06px;">Uniforme - X +</span>
<div class="abs" style="left:561px;top:367px;width:102px;height:21px;background:#ccffcc"></div>
<div class="abs" style="left:664px;top:367px;width:53px;height:21px;background:#ccffcc"></div>
<div class="abs" style="left:718px;top:367px;width:59px;height:21px;background:#ccffcc"></div>
<div class="abs" style="left:778px;top:367px;width:69px;height:21px;background:#ccffcc"></div>
<div class="abs" style="left:848px;top:367px;width:79px;height:21px;background:#ccffcc"></div>
<div class="abs" style="left:928px;top:367px;width:79px;height:21px;background:#ccffcc"></div>
<div class="abs" style="left:1008px;top:367px;width:83px;height:21px;background:#ccffcc"></div>
<span class="t" style="left:564.0px;top:372px;font-size:11px;letter-spacing:-0.15px;">Zapata individual</span>
<span class="t" style="left:667.7px;top:372px;font-size:11px;">1</span>
<span class="t" style="left:720.7px;top:372px;font-size:11px;letter-spacing:-0.11px;">X' (long.)</span>
<span class="t" style="left:781.0px;top:372px;font-size:11px;letter-spacing:-0.09px;">144,766465</span>
<span class="t" style="left:850.7px;top:372px;font-size:11px;letter-spacing:-0.09px;">420,594517</span>
<span class="t" style="left:930.7px;top:372px;font-size:11px;letter-spacing:-0.09px;">0,344195</span>
<span class="t" style="left:1010.3px;top:372px;font-size:11px;letter-spacing:-0.06px;">Uniforme - X +</span>
<div class="abs" style="left:561px;top:389px;width:102px;height:21px;background:#ccffcc"></div>
<div class="abs" style="left:664px;top:389px;width:53px;height:21px;background:#ccffcc"></div>
<div class="abs" style="left:718px;top:389px;width:59px;height:21px;background:#ccffcc"></div>
<div class="abs" style="left:778px;top:389px;width:69px;height:21px;background:#ccffcc"></div>
<div class="abs" style="left:848px;top:389px;width:79px;height:21px;background:#ccffcc"></div>
<div class="abs" style="left:928px;top:389px;width:79px;height:21px;background:#ccffcc"></div>
<div class="abs" style="left:1008px;top:389px;width:83px;height:21px;background:#ccffcc"></div>
<span class="t" style="left:564.0px;top:394px;font-size:11px;letter-spacing:-0.15px;">Zapata individual</span>
<span class="t" style="left:667.7px;top:394px;font-size:11px;">1</span>
<span class="t" style="left:720.7px;top:394px;font-size:11px;letter-spacing:0.02px;">Y' (trans.)</span>
<span class="t" style="left:781.0px;top:394px;font-size:11px;letter-spacing:-0.09px;">175,743994</span>
<span class="t" style="left:850.7px;top:394px;font-size:11px;letter-spacing:-0.09px;">435,931865</span>
<span class="t" style="left:930.7px;top:394px;font-size:11px;letter-spacing:-0.09px;">0,403146</span>
<span class="t" style="left:1010.3px;top:394px;font-size:11px;letter-spacing:-0.06px;">Uniforme - X +</span>
<div class="abs" style="left:561px;top:411px;width:102px;height:21px;background:#ccffcc"></div>
<div class="abs" style="left:664px;top:411px;width:53px;height:21px;background:#ccffcc"></div>
<div class="abs" style="left:718px;top:411px;width:59px;height:21px;background:#ccffcc"></div>
<div class="abs" style="left:778px;top:411px;width:69px;height:21px;background:#ccffcc"></div>
<div class="abs" style="left:848px;top:411px;width:79px;height:21px;background:#ccffcc"></div>
<div class="abs" style="left:928px;top:411px;width:79px;height:21px;background:#ccffcc"></div>
<div class="abs" style="left:1008px;top:411px;width:83px;height:21px;background:#ccffcc"></div>
<span class="t" style="left:564.0px;top:416px;font-size:11px;letter-spacing:-0.15px;">Zapata individual</span>
<span class="t" style="left:667.7px;top:416px;font-size:11px;">1</span>
<span class="t" style="left:720.7px;top:416px;font-size:11px;letter-spacing:-0.11px;">X' (long.)</span>
<span class="t" style="left:781.0px;top:416px;font-size:11px;letter-spacing:-0.09px;">104,989770</span>
<span class="t" style="left:850.7px;top:416px;font-size:11px;letter-spacing:-0.09px;">368,044248</span>
<span class="t" style="left:930.7px;top:416px;font-size:11px;letter-spacing:-0.09px;">0,285264</span>
<span class="t" style="left:1010.3px;top:416px;font-size:11px;letter-spacing:-0.06px;">Uniforme + X -</span>
<div class="abs" style="left:561px;top:433px;width:102px;height:21px;background:#ccffcc"></div>
<div class="abs" style="left:664px;top:433px;width:53px;height:21px;background:#ccffcc"></div>
<div class="abs" style="left:718px;top:433px;width:59px;height:21px;background:#ccffcc"></div>
<div class="abs" style="left:778px;top:433px;width:69px;height:21px;background:#ccffcc"></div>
<div class="abs" style="left:848px;top:433px;width:79px;height:21px;background:#ccffcc"></div>
<div class="abs" style="left:928px;top:433px;width:79px;height:21px;background:#ccffcc"></div>
<div class="abs" style="left:1008px;top:433px;width:83px;height:21px;background:#ccffcc"></div>
<span class="t" style="left:564.0px;top:438px;font-size:11px;letter-spacing:-0.15px;">Zapata individual</span>
<span class="t" style="left:667.7px;top:438px;font-size:11px;">1</span>
<span class="t" style="left:720.7px;top:438px;font-size:11px;letter-spacing:0.02px;">Y' (trans.)</span>
<span class="t" style="left:781.0px;top:438px;font-size:11px;letter-spacing:-0.01px;">113,017569</span>
<span class="t" style="left:850.7px;top:438px;font-size:11px;letter-spacing:-0.09px;">435,931865</span>
<span class="t" style="left:930.7px;top:438px;font-size:11px;letter-spacing:-0.09px;">0,259255</span>
<span class="t" style="left:1010.3px;top:438px;font-size:11px;letter-spacing:0.03px;">Uniforme + X +</span>
<div class="abs" style="left:561px;top:455px;width:102px;height:21px;background:#ccffcc"></div>
<div class="abs" style="left:664px;top:455px;width:53px;height:21px;background:#ccffcc"></div>
<div class="abs" style="left:718px;top:455px;width:59px;height:21px;background:#ccffcc"></div>
<div class="abs" style="left:778px;top:455px;width:69px;height:21px;background:#ccffcc"></div>
<div class="abs" style="left:848px;top:455px;width:79px;height:21px;background:#ccffcc"></div>
<div class="abs" style="left:928px;top:455px;width:79px;height:21px;background:#ccffcc"></div>
<div class="abs" style="left:1008px;top:455px;width:83px;height:21px;background:#ccffcc"></div>
<span class="t" style="left:564.0px;top:460px;font-size:11px;letter-spacing:-0.15px;">Zapata individual</span>
<span class="t" style="left:667.7px;top:460px;font-size:11px;">1</span>
<span class="t" style="left:720.7px;top:460px;font-size:11px;letter-spacing:-0.11px;">X' (long.)</span>
<span class="t" style="left:781.0px;top:460px;font-size:11px;letter-spacing:-0.01px;">112,247338</span>
<span class="t" style="left:850.7px;top:460px;font-size:11px;letter-spacing:-0.01px;">414,028118</span>
<span class="t" style="left:930.7px;top:460px;font-size:11px;letter-spacing:0.12px;">0,271110</span>
<span class="t" style="left:1010.3px;top:460px;font-size:11px;letter-spacing:-0.06px;">Uniforme + X -</span>
<div class="abs" style="left:561px;top:477px;width:102px;height:21px;background:#ccffcc"></div>
<div class="abs" style="left:664px;top:477px;width:53px;height:21px;background:#ccffcc"></div>
<div class="abs" style="left:718px;top:477px;width:59px;height:21px;background:#ccffcc"></div>
<div class="abs" style="left:778px;top:477px;width:69px;height:21px;background:#ccffcc"></div>
<div class="abs" style="left:848px;top:477px;width:79px;height:21px;background:#ccffcc"></div>
<div class="abs" style="left:928px;top:477px;width:79px;height:21px;background:#ccffcc"></div>
<div class="abs" style="left:1008px;top:477px;width:83px;height:21px;background:#ccffcc"></div>
<span class="t" style="left:564.0px;top:482px;font-size:11px;letter-spacing:-0.15px;">Zapata individual</span>
<span class="t" style="left:667.7px;top:482px;font-size:11px;">1</span>
<span class="t" style="left:720.7px;top:482px;font-size:11px;letter-spacing:0.02px;">Y' (trans.)</span>
<span class="t" style="left:781.0px;top:482px;font-size:11px;letter-spacing:-0.09px;">137,662178</span>
<span class="t" style="left:850.7px;top:482px;font-size:11px;letter-spacing:-0.09px;">435,931864</span>
<span class="t" style="left:930.7px;top:482px;font-size:11px;letter-spacing:-0.09px;">0,315788</span>
<span class="t" style="left:1010.3px;top:482px;font-size:11px;letter-spacing:-0.06px;">Uniforme + X -</span>
<div class="abs" style="left:561px;top:499px;width:102px;height:21px;background:#ffcccc"></div>
<div class="abs" style="left:664px;top:499px;width:53px;height:21px;background:#ffcccc"></div>
<div class="abs" style="left:718px;top:499px;width:59px;height:21px;background:#ffcccc"></div>
<div class="abs" style="left:778px;top:499px;width:69px;height:21px;background:#ffcccc"></div>
<div class="abs" style="left:848px;top:499px;width:79px;height:21px;background:#ffcccc"></div>
<div class="abs" style="left:928px;top:499px;width:79px;height:21px;background:#ffcccc"></div>
<div class="abs" style="left:1008px;top:499px;width:83px;height:21px;background:#ffcccc"></div>
<span class="t" style="left:564.0px;top:504px;font-size:11px;letter-spacing:-0.15px;">Zapata individual</span>
<span class="t" style="left:667.7px;top:504px;font-size:11px;">1</span>
<span class="t" style="left:720.7px;top:504px;font-size:11px;letter-spacing:-0.11px;">X' (long.)</span>
<span class="t" style="left:781.0px;top:504px;font-size:11px;letter-spacing:-0.01px;">33439,10311</span>
<span class="t" style="left:850.7px;top:504px;font-size:11px;letter-spacing:-0.09px;">420,594516</span>
<span class="t" style="left:930.7px;top:504px;font-size:11px;letter-spacing:-0.09px;">79,504373</span>
<span class="t" style="left:1010.3px;top:504px;font-size:11px;letter-spacing:-0.06px;">Uniforme + X -</span>
<div class="abs" style="left:561px;top:521px;width:102px;height:21px;background:#ffcccc"></div>
<div class="abs" style="left:664px;top:521px;width:53px;height:21px;background:#ffcccc"></div>
<div class="abs" style="left:718px;top:521px;width:59px;height:21px;background:#ffcccc"></div>
<div class="abs" style="left:778px;top:521px;width:69px;height:21px;background:#ffcccc"></div>
<div class="abs" style="left:848px;top:521px;width:79px;height:21px;background:#ffcccc"></div>
<div class="abs" style="left:928px;top:521px;width:79px;height:21px;background:#ffcccc"></div>
<div class="abs" style="left:1008px;top:521px;width:83px;height:21px;background:#ffcccc"></div>
<span class="t" style="left:564.0px;top:526px;font-size:11px;letter-spacing:-0.15px;">Zapata individual</span>
<span class="t" style="left:667.7px;top:526px;font-size:11px;">1</span>
<span class="t" style="left:720.7px;top:526px;font-size:11px;letter-spacing:0.02px;">Y' (trans.)</span>
<span class="t" style="left:781.0px;top:526px;font-size:11px;letter-spacing:-0.09px;">39252,36717</span>
<span class="t" style="left:850.7px;top:526px;font-size:11px;letter-spacing:-0.09px;">435,931864</span>
<span class="t" style="left:930.7px;top:526px;font-size:11px;letter-spacing:-0.09px;">90,042436</span>
<span class="t" style="left:1010.3px;top:526px;font-size:11px;letter-spacing:-0.06px;">Uniforme + X -</span>
<div class="abs" style="left:561px;top:543px;width:102px;height:21px;background:#ffcccc"></div>
<div class="abs" style="left:664px;top:543px;width:53px;height:21px;background:#ffcccc"></div>
<div class="abs" style="left:718px;top:543px;width:59px;height:21px;background:#ffcccc"></div>
<div class="abs" style="left:778px;top:543px;width:69px;height:21px;background:#ffcccc"></div>
<div class="abs" style="left:848px;top:543px;width:79px;height:21px;background:#ffcccc"></div>
<div class="abs" style="left:928px;top:543px;width:79px;height:21px;background:#ffcccc"></div>
<div class="abs" style="left:1008px;top:543px;width:83px;height:21px;background:#ffcccc"></div>
<span class="t" style="left:564.0px;top:548px;font-size:11px;letter-spacing:-0.15px;">Zapata individual</span>
<span class="t" style="left:667.7px;top:548px;font-size:11px;">1</span>
<span class="t" style="left:720.7px;top:548px;font-size:11px;letter-spacing:-0.11px;">X' (long.)</span>
<span class="t" style="left:781.0px;top:548px;font-size:11px;letter-spacing:-0.09px;">541,572536</span>
<span class="t" style="left:850.7px;top:548px;font-size:11px;letter-spacing:-0.09px;">364,225159</span>
<span class="t" style="left:930.7px;top:548px;font-size:11px;letter-spacing:-0.09px;">1,486917</span>
<span class="t" style="left:1010.3px;top:548px;font-size:11px;letter-spacing:0.03px;">Uniforme + X +</span>
<div class="abs" style="left:561px;top:565px;width:102px;height:21px;background:#ccffcc"></div>
<div class="abs" style="left:664px;top:565px;width:53px;height:21px;background:#ccffcc"></div>
<div class="abs" style="left:718px;top:565px;width:59px;height:21px;background:#ccffcc"></div>
<div class="abs" style="left:778px;top:565px;width:69px;height:21px;background:#ccffcc"></div>
<div class="abs" style="left:848px;top:565px;width:79px;height:21px;background:#ccffcc"></div>
<div class="abs" style="left:928px;top:565px;width:79px;height:21px;background:#ccffcc"></div>
<div class="abs" style="left:1008px;top:565px;width:83px;height:21px;background:#ccffcc"></div>
<span class="t" style="left:564.0px;top:570px;font-size:11px;letter-spacing:-0.15px;">Zapata individual</span>
<span class="t" style="left:667.7px;top:570px;font-size:11px;">1</span>
<span class="t" style="left:720.7px;top:570px;font-size:11px;letter-spacing:0.02px;">Y' (trans.)</span>
<span class="t" style="left:781.0px;top:570px;font-size:11px;letter-spacing:-0.09px;">140,162789</span>
<span class="t" style="left:850.7px;top:570px;font-size:11px;letter-spacing:-0.09px;">646,397401</span>
<span class="t" style="left:930.7px;top:570px;font-size:11px;letter-spacing:-0.09px;">0,216837</span>
<span class="t" style="left:1010.3px;top:570px;font-size:11px;letter-spacing:0.03px;">Uniforme + X +</span>
<!-- 3D VIEW -->
<div class="abs" style="left:1191px;top:167px;width:638px;height:838px;background:#fff;border:1px solid #d5d5d5"></div>
<div class="abs" style="left:1192px;top:168px;width:636px;height:14px;background:#f0f0f0"></div>
<svg class="abs" style="left:1192px;top:182px" width="636" height="822" viewBox="0 0 636 822">
<defs><pattern id="pv" width="48" height="64" patternUnits="userSpaceOnUse" patternTransform="rotate(1.5)"><rect x="0.0" y="0" width="1.0" height="64" fill="#000" fill-opacity="0.09"/><rect x="1.3" y="0" width="0.6" height="64" fill="#000" fill-opacity="0.11"/><rect x="4.3" y="0" width="0.8" height="64" fill="#000" fill-opacity="0.05"/><rect x="6.4" y="0" width="0.8" height="64" fill="#000" fill-opacity="0.11"/><rect x="7.7" y="0" width="0.6" height="64" fill="#000" fill-opacity="0.12"/><rect x="10.0" y="0" width="0.6" height="64" fill="#fff" fill-opacity="0.11"/><rect x="11.3" y="0" width="0.8" height="64" fill="#000" fill-opacity="0.11"/><rect x="12.8" y="0" width="1.4" height="64" fill="#000" fill-opacity="0.10"/><rect x="15.1" y="0" width="0.8" height="64" fill="#000" fill-opacity="0.11"/><rect x="17.6" y="0" width="1.0" height="64" fill="#000" fill-opacity="0.11"/><rect x="18.9" y="0" width="0.6" height="64" fill="#fff" fill-opacity="0.06"/><rect x="21.5" y="0" width="1.4" height="64" fill="#000" fill-opacity="0.10"/><rect x="24.6" y="0" width="1.0" height="64" fill="#000" fill-opacity="0.07"/><rect x="26.1" y="0" width="0.8" height="64" fill="#000" fill-opacity="0.11"/><rect x="28.4" y="0" width="1.0" height="64" fill="#fff" fill-opacity="0.09"/><rect x="30.8" y="0" width="0.6" height="64" fill="#000" fill-opacity="0.10"/><rect x="32.3" y="0" width="1.0" height="64" fill="#000" fill-opacity="0.15"/><rect x="34.4" y="0" width="0.6" height="64" fill="#fff" fill-opacity="0.11"/><rect x="37.3" y="0" width="1.0" height="64" fill="#000" fill-opacity="0.12"/><rect x="39.7" y="0" width="1.4" height="64" fill="#000" fill-opacity="0.14"/><rect x="42.8" y="0" width="1.4" height="64" fill="#fff" fill-opacity="0.12"/><rect x="44.1" y="0" width="1.0" height="64" fill="#fff" fill-opacity="0.11"/><rect x="46.7" y="0" width="1.4" height="64" fill="#000" fill-opacity="0.13"/></pattern><pattern id="ph" width="96" height="40" patternUnits="userSpaceOnUse" patternTransform="rotate(-7)"><rect x="0" y="0.0" width="96" height="1.0" fill="#000" fill-opacity="0.14"/><rect x="0" y="1.8" width="96" height="0.6" fill="#000" fill-opacity="0.05"/><rect x="0" y="4.4" width="96" height="0.8" fill="#fff" fill-opacity="0.07"/><rect x="0" y="6.3" width="96" height="1.3" fill="#000" fill-opacity="0.06"/><rect x="0" y="8.2" width="96" height="1.0" fill="#000" fill-opacity="0.13"/><rect x="0" y="11.0" width="96" height="1.0" fill="#fff" fill-opacity="0.09"/><rect x="0" y="12.9" width="96" height="1.3" fill="#000" fill-opacity="0.06"/><rect x="0" y="14.4" width="96" height="0.8" fill="#fff" fill-opacity="0.07"/><rect x="0" y="16.4" width="96" height="0.8" fill="#000" fill-opacity="0.07"/><rect x="0" y="17.9" width="96" height="1.0" fill="#fff" fill-opacity="0.10"/><rect x="0" y="20.8" width="96" height="0.6" fill="#000" fill-opacity="0.14"/><rect x="0" y="23.4" width="96" height="1.3" fill="#000" fill-opacity="0.08"/><rect x="0" y="24.8" width="96" height="1.3" fill="#000" fill-opacity="0.06"/><rect x="0" y="27.8" width="96" height="1.3" fill="#000" fill-opacity="0.05"/><rect x="0" y="30.1" width="96" height="0.6" fill="#000" fill-opacity="0.10"/><rect x="0" y="32.2" width="96" height="1.0" fill="#fff" fill-opacity="0.04"/><rect x="0" y="35.0" width="96" height="1.3" fill="#000" fill-opacity="0.11"/><rect x="0" y="37.9" width="96" height="1.0" fill="#000" fill-opacity="0.05"/></pattern><pattern id="ph2" width="96" height="40" patternUnits="userSpaceOnUse" patternTransform="rotate(12)"><rect x="0" y="0.0" width="96" height="1.0" fill="#000" fill-opacity="0.14"/><rect x="0" y="1.8" width="96" height="0.6" fill="#000" fill-opacity="0.05"/><rect x="0" y="4.4" width="96" height="0.8" fill="#fff" fill-opacity="0.07"/><rect x="0" y="6.3" width="96" height="1.3" fill="#000" fill-opacity="0.06"/><rect x="0" y="8.2" width="96" height="1.0" fill="#000" fill-opacity="0.13"/><rect x="0" y="11.0" width="96" height="1.0" fill="#fff" fill-opacity="0.09"/><rect x="0" y="12.9" width="96" height="1.3" fill="#000" fill-opacity="0.06"/><rect x="0" y="14.4" width="96" height="0.8" fill="#fff" fill-opacity="0.07"/><rect x="0" y="16.4" width="96" height="0.8" fill="#000" fill-opacity="0.07"/><rect x="0" y="17.9" width="96" height="1.0" fill="#fff" fill-opacity="0.10"/><rect x="0" y="20.8" width="96" height="0.6" fill="#000" fill-opacity="0.14"/><rect x="0" y="23.4" width="96" height="1.3" fill="#000" fill-opacity="0.08"/><rect x="0" y="24.8" width="96" height="1.3" fill="#000" fill-opacity="0.06"/><rect x="0" y="27.8" width="96" height="1.3" fill="#000" fill-opacity="0.05"/><rect x="0" y="30.1" width="96" height="0.6" fill="#000" fill-opacity="0.10"/><rect x="0" y="32.2" width="96" height="1.0" fill="#fff" fill-opacity="0.04"/><rect x="0" y="35.0" width="96" height="1.3" fill="#000" fill-opacity="0.11"/><rect x="0" y="37.9" width="96" height="1.0" fill="#000" fill-opacity="0.05"/></pattern></defs>
<defs><clipPath id="gclip"><polygon points="0,0 636,0 636,822 0,822"/></clipPath>
<clipPath id="fclip"><polygon points="294.2,467.4 340.0,455.7 293.0,444.3 247.4,454.7"/><polygon points="344.2,481.4 390.5,467.9 343.3,456.5 296.8,468.5"/><polygon points="157.1,488.2 235.5,469.3 189.1,455.5 112.5,471.8"/><polygon points="445.0,510.2 490.8,492.7 428.7,477.6 381.7,492.8"/><polygon points="230.5,515.1 292.1,497.1 243.0,481.7 182.2,497.4"/><polygon points="69.2,516.7 137.1,499.9 97.0,483.9 31.3,498.5"/><polygon points="128.1,543.1 201.9,521.7 156.2,503.7 84.4,522.2"/><polygon points="337.4,550.6 398.4,527.3 334.5,507.6 273.3,527.3"/><polygon points="232.0,590.0 309.2,560.6 245.7,536.0 169.8,560.5"/></clipPath></defs>
<g clip-path="url(#gclip)"><path d="M-308.9 1779.5L-450.5 348.1M-308.9 1779.5L1015.5 348.1M7.9 1437.0L-425.4 346.7M-342.8 1437.0L991.5 346.7M208.1 1220.7L-401.1 345.3M-364.2 1220.7L968.4 345.3M346.0 1071.7L-377.6 344.0M-378.9 1071.7L945.9 344.0M446.8 962.7L-354.8 342.8M-389.7 962.7L924.2 342.8M523.7 879.6L-332.7 341.5M-397.9 879.6L903.1 341.5M584.2 814.2L-311.2 340.3M-404.4 814.2L882.6 340.3M633.2 761.2L-290.4 339.2M-409.6 761.2L862.8 339.2M673.6 717.6L-270.2 338.1M-414.0 717.6L843.5 338.1M707.5 680.9L-250.6 337.0M-417.6 680.9L824.8 337.0M736.4 649.8L-231.5 335.9M-420.7 649.8L806.6 335.9M761.2 622.9L-213.0 334.9M-423.3 622.9L788.9 334.9M782.8 599.5L-195.0 333.9M-425.6 599.5L771.7 333.9M801.8 579.0L-177.4 332.9M-427.7 579.0L755.0 332.9M818.7 560.8L-160.4 332.0M-429.5 560.8L738.7 332.0M833.7 544.6L-143.8 331.0M-431.1 544.6L722.9 331.0M847.1 530.1L-127.6 330.1M-432.5 530.1L707.4 330.1M859.2 517.0L-111.8 329.3M-433.8 517.0L692.4 329.3M870.2 505.1L-96.5 328.4M-435.0 505.1L677.7 328.4M880.3 494.2L-81.5 327.6M-436.0 494.2L663.5 327.6M889.4 484.3L-66.9 326.8M-437.0 484.3L649.5 326.8M897.8 475.2L-52.7 326.0M-437.9 475.2L635.9 326.0M905.6 466.9L-38.8 325.2M-438.8 466.9L622.7 325.2M912.8 459.1L-25.2 324.4M-439.5 459.1L609.7 324.4M919.4 451.9L-12.0 323.7M-440.2 451.9L597.1 323.7M925.6 445.3L1.0 323.0M-440.9 445.3L584.8 323.0M931.3 439.0L13.6 322.3M-441.5 439.0L572.7 322.3M936.7 433.2L26.0 321.6M-442.1 433.2L560.9 321.6M941.7 427.8L38.0 320.9M-442.6 427.8L549.4 320.9M946.5 422.7L49.8 320.3M-443.1 422.7L538.2 320.3M950.9 417.9L61.4 319.6M-443.6 417.9L527.1 319.6M955.1 413.4L72.6 319.0M-444.0 413.4L516.4 319.0M959.0 409.1L83.7 318.4M-444.5 409.1L505.8 318.4M962.8 405.1L94.5 317.8M-444.9 405.1L495.5 317.8M966.3 401.2L105.1 317.2M-445.2 401.2L485.4 317.2M969.7 397.6L115.4 316.6M-445.6 397.6L475.6 316.6M972.8 394.2L125.6 316.1M-445.9 394.2L465.9 316.1M975.9 390.9L135.5 315.5M-446.3 390.9L456.4 315.5M978.7 387.8L145.2 315.0M-446.6 387.8L447.1 315.0M981.5 384.8L154.8 314.4M-446.9 384.8L438.0 314.4M984.1 382.0L164.1 313.9M-447.1 382.0L429.1 313.9M986.6 379.3L173.3 313.4M-447.4 379.3L420.4 313.4M989.0 376.7L182.3 312.9M-447.7 376.7L411.8 312.9M991.3 374.3L191.1 312.4M-447.9 374.3L403.4 312.4M993.4 371.9L199.7 311.9M-448.1 371.9L395.1 311.9M995.5 369.6L208.2 311.5M-448.4 369.6L387.0 311.5M997.6 367.5L216.5 311.0M-448.6 367.5L379.1 311.0M999.5 365.4L224.7 310.5M-448.8 365.4L371.3 310.5M1001.3 363.4L232.7 310.1M-449.0 363.4L363.7 310.1M1003.1 361.4L240.6 309.7M-449.2 361.4L356.2 309.7M1004.8 359.6L248.3 309.2M-449.4 359.6L348.8 309.2M1006.5 357.8L255.9 308.8M-449.5 357.8L341.5 308.8M1008.1 356.1L263.4 308.4M-449.7 356.1L334.4 308.4M1009.6 354.4L270.7 308.0M-449.9 354.4L327.5 308.0M1011.1 352.8L277.9 307.6M-450.0 352.8L320.6 307.6M1012.6 351.2L284.9 307.2M-450.2 351.2L313.8 307.2M1013.9 349.7L291.9 306.8M-450.3 349.7L307.2 306.8M1015.3 348.3L298.7 306.4M-450.5 348.3L300.7 306.4" fill="none" stroke="#767676" stroke-width="1"/></g>
<polygon points="294.3,484.1 247.6,470.4 247.4,454.7 294.2,467.4" fill="#6e7575"/>
<polygon points="294.3,484.1 339.9,471.5 340.0,455.7 294.2,467.4" fill="#7d8484"/>
<polygon points="294.2,467.4 340.0,455.7 293.0,444.3 247.4,454.7" fill="#868e8e"/>
<polygon points="340.0,455.7 293.0,444.3 292.6,445.6 298.9,447.1" fill="#8f9797"/>
<polygon points="247.4,454.7 293.0,444.3 292.6,445.6 285.9,447.1" fill="#8c9494"/>
<polygon points="294.2,467.4 247.4,454.7 285.9,447.1 292.2,448.7" fill="#7a8282"/>
<polygon points="294.2,467.4 340.0,455.7 298.9,447.1 292.2,448.7" fill="#8a9292"/>
<polygon points="344.1,499.2 296.9,485.3 296.8,468.5 344.2,481.4" fill="#6e7575"/>
<polygon points="344.1,499.2 390.2,484.6 390.5,467.9 344.2,481.4" fill="#7d8484"/>
<polygon points="344.2,481.4 390.5,467.9 343.3,456.5 296.8,468.5" fill="#868e8e"/>
<polygon points="390.5,467.9 343.3,456.5 340.0,457.6 347.1,459.3" fill="#8f9797"/>
<polygon points="296.8,468.5 343.3,456.5 340.0,457.6 333.3,459.3" fill="#8c9494"/>
<polygon points="344.2,481.4 296.8,468.5 333.3,459.3 340.4,461.1" fill="#7a8282"/>
<polygon points="344.2,481.4 390.5,467.9 347.1,459.3 340.4,461.1" fill="#8a9292"/>
<polygon points="157.9,506.5 113.4,488.8 112.5,471.8 157.1,488.2" fill="#a30000"/>
<polygon points="157.9,506.5 235.9,486.1 235.5,469.3 157.1,488.2" fill="#980000"/>
<polygon points="157.1,488.2 235.5,469.3 189.1,455.5 112.5,471.8" fill="#aa0000"/>
<polygon points="235.5,469.3 189.1,455.5 186.6,457.3 194.0,459.6" fill="#ad0000"/>
<polygon points="112.5,471.8 189.1,455.5 186.6,457.3 160.2,463.0" fill="#ab0000"/>
<polygon points="157.1,488.2 112.5,471.8 160.2,463.0 167.5,465.4" fill="#a60000"/>
<polygon points="157.1,488.2 235.5,469.3 194.0,459.6 167.5,465.4" fill="#a00000"/>
<polygon points="444.4,530.1 381.4,511.4 381.7,492.8 445.0,510.2" fill="#a30000"/>
<polygon points="444.4,530.1 490.0,511.3 490.8,492.7 445.0,510.2" fill="#980000"/>
<polygon points="445.0,510.2 490.8,492.7 428.7,477.6 381.7,492.8" fill="#aa0000"/>
<polygon points="490.8,492.7 428.7,477.6 434.7,480.8 443.6,482.9" fill="#ad0000"/>
<polygon points="381.7,492.8 428.7,477.6 434.7,480.8 428.1,482.9" fill="#ab0000"/>
<polygon points="445.0,510.2 381.7,492.8 428.1,482.9 437.0,485.2" fill="#a60000"/>
<polygon points="445.0,510.2 490.8,492.7 443.6,482.9 437.0,485.2" fill="#a00000"/>
<polygon points="230.9,535.4 182.9,516.4 182.2,497.4 230.5,515.1" fill="#6e7575"/>
<polygon points="230.9,535.4 292.2,516.0 292.1,497.1 230.5,515.1" fill="#7d8484"/>
<polygon points="230.5,515.1 292.1,497.1 243.0,481.7 182.2,497.4" fill="#868e8e"/>
<polygon points="292.1,497.1 243.0,481.7 240.1,483.5 247.1,485.7" fill="#8f9797"/>
<polygon points="182.2,497.4 243.0,481.7 240.1,483.5 231.4,485.7" fill="#8c9494"/>
<polygon points="230.5,515.1 182.2,497.4 231.4,485.7 238.5,488.0" fill="#7a8282"/>
<polygon points="230.5,515.1 292.1,497.1 247.1,485.7 238.5,488.0" fill="#8a9292"/>
<polygon points="70.5,537.1 32.8,517.5 31.3,498.5 69.2,516.7" fill="#a30000"/>
<polygon points="70.5,537.1 138.0,519.0 137.1,499.9 69.2,516.7" fill="#980000"/>
<polygon points="69.2,516.7 137.1,499.9 97.0,483.9 31.3,498.5" fill="#aa0000"/>
<polygon points="137.1,499.9 97.0,483.9 87.7,483.3 93.2,485.5" fill="#ad0000"/>
<polygon points="31.3,498.5 97.0,483.9 87.7,483.3 77.5,485.5" fill="#ab0000"/>
<polygon points="69.2,516.7 31.3,498.5 77.5,485.5 83.0,487.8" fill="#a60000"/>
<polygon points="69.2,516.7 137.1,499.9 93.2,485.5 83.0,487.8" fill="#a00000"/>
<polygon points="129.3,565.4 85.7,543.0 84.4,522.2 128.1,543.1" fill="#6e7575"/>
<polygon points="129.3,565.4 202.5,542.4 201.9,521.7 128.1,543.1" fill="#7d8484"/>
<polygon points="128.1,543.1 201.9,521.7 156.2,503.7 84.4,522.2" fill="#868e8e"/>
<polygon points="201.9,521.7 156.2,503.7 147.4,507.4 154.2,510.2" fill="#8f9797"/>
<polygon points="84.4,522.2 156.2,503.7 147.4,507.4 136.8,510.2" fill="#8c9494"/>
<polygon points="128.1,543.1 84.4,522.2 136.8,510.2 143.6,513.0" fill="#7a8282"/>
<polygon points="128.1,543.1 201.9,521.7 154.2,510.2 143.6,513.0" fill="#8a9292"/>
<polygon points="337.3,573.5 273.6,548.5 273.3,527.3 337.4,550.6" fill="#6e7575"/>
<polygon points="337.3,573.5 398.0,548.5 398.4,527.3 337.4,550.6" fill="#7d8484"/>
<polygon points="337.4,550.6 398.4,527.3 334.5,507.6 273.3,527.3" fill="#868e8e"/>
<polygon points="398.4,527.3 334.5,507.6 335.3,512.9 346.6,516.5" fill="#8f9797"/>
<polygon points="273.3,527.3 334.5,507.6 335.3,512.9 324.4,516.5" fill="#8c9494"/>
<polygon points="337.4,550.6 273.3,527.3 324.4,516.5 335.8,520.2" fill="#7a8282"/>
<polygon points="337.4,550.6 398.4,527.3 346.6,516.5 335.8,520.2" fill="#8a9292"/>
<polygon points="232.6,615.7 170.7,584.1 169.8,560.5 232.0,590.0" fill="#6e7575"/>
<polygon points="232.6,615.7 309.2,584.3 309.2,560.6 232.0,590.0" fill="#7d8484"/>
<polygon points="232.0,590.0 309.2,560.6 245.7,536.0 169.8,560.5" fill="#868e8e"/>
<polygon points="309.2,560.6 245.7,536.0 240.4,545.1 249.5,548.7" fill="#8f9797"/>
<polygon points="169.8,560.5 245.7,536.0 240.4,545.1 229.4,548.7" fill="#8c9494"/>
<polygon points="232.0,590.0 169.8,560.5 229.4,548.7 238.4,552.5" fill="#7a8282"/>
<polygon points="232.0,590.0 309.2,560.6 249.5,548.7 238.4,552.5" fill="#8a9292"/>
<g clip-path="url(#fclip)"><path d="M-308.9 1779.5L-450.5 348.1M-308.9 1779.5L1015.5 348.1M7.9 1437.0L-425.4 346.7M-342.8 1437.0L991.5 346.7M208.1 1220.7L-401.1 345.3M-364.2 1220.7L968.4 345.3M346.0 1071.7L-377.6 344.0M-378.9 1071.7L945.9 344.0M446.8 962.7L-354.8 342.8M-389.7 962.7L924.2 342.8M523.7 879.6L-332.7 341.5M-397.9 879.6L903.1 341.5M584.2 814.2L-311.2 340.3M-404.4 814.2L882.6 340.3M633.2 761.2L-290.4 339.2M-409.6 761.2L862.8 339.2M673.6 717.6L-270.2 338.1M-414.0 717.6L843.5 338.1M707.5 680.9L-250.6 337.0M-417.6 680.9L824.8 337.0M736.4 649.8L-231.5 335.9M-420.7 649.8L806.6 335.9M761.2 622.9L-213.0 334.9M-423.3 622.9L788.9 334.9M782.8 599.5L-195.0 333.9M-425.6 599.5L771.7 333.9M801.8 579.0L-177.4 332.9M-427.7 579.0L755.0 332.9M818.7 560.8L-160.4 332.0M-429.5 560.8L738.7 332.0M833.7 544.6L-143.8 331.0M-431.1 544.6L722.9 331.0M847.1 530.1L-127.6 330.1M-432.5 530.1L707.4 330.1M859.2 517.0L-111.8 329.3M-433.8 517.0L692.4 329.3M870.2 505.1L-96.5 328.4M-435.0 505.1L677.7 328.4M880.3 494.2L-81.5 327.6M-436.0 494.2L663.5 327.6M889.4 484.3L-66.9 326.8M-437.0 484.3L649.5 326.8M897.8 475.2L-52.7 326.0M-437.9 475.2L635.9 326.0M905.6 466.9L-38.8 325.2M-438.8 466.9L622.7 325.2M912.8 459.1L-25.2 324.4M-439.5 459.1L609.7 324.4M919.4 451.9L-12.0 323.7M-440.2 451.9L597.1 323.7M925.6 445.3L1.0 323.0M-440.9 445.3L584.8 323.0M931.3 439.0L13.6 322.3M-441.5 439.0L572.7 322.3M936.7 433.2L26.0 321.6M-442.1 433.2L560.9 321.6M941.7 427.8L38.0 320.9M-442.6 427.8L549.4 320.9M946.5 422.7L49.8 320.3M-443.1 422.7L538.2 320.3M950.9 417.9L61.4 319.6M-443.6 417.9L527.1 319.6M955.1 413.4L72.6 319.0M-444.0 413.4L516.4 319.0M959.0 409.1L83.7 318.4M-444.5 409.1L505.8 318.4M962.8 405.1L94.5 317.8M-444.9 405.1L495.5 317.8M966.3 401.2L105.1 317.2M-445.2 401.2L485.4 317.2M969.7 397.6L115.4 316.6M-445.6 397.6L475.6 316.6M972.8 394.2L125.6 316.1M-445.9 394.2L465.9 316.1M975.9 390.9L135.5 315.5M-446.3 390.9L456.4 315.5M978.7 387.8L145.2 315.0M-446.6 387.8L447.1 315.0M981.5 384.8L154.8 314.4M-446.9 384.8L438.0 314.4M984.1 382.0L164.1 313.9M-447.1 382.0L429.1 313.9M986.6 379.3L173.3 313.4M-447.4 379.3L420.4 313.4M989.0 376.7L182.3 312.9M-447.7 376.7L411.8 312.9M991.3 374.3L191.1 312.4M-447.9 374.3L403.4 312.4M993.4 371.9L199.7 311.9M-448.1 371.9L395.1 311.9M995.5 369.6L208.2 311.5M-448.4 369.6L387.0 311.5M997.6 367.5L216.5 311.0M-448.6 367.5L379.1 311.0M999.5 365.4L224.7 310.5M-448.8 365.4L371.3 310.5M1001.3 363.4L232.7 310.1M-449.0 363.4L363.7 310.1M1003.1 361.4L240.6 309.7M-449.2 361.4L356.2 309.7M1004.8 359.6L248.3 309.2M-449.4 359.6L348.8 309.2M1006.5 357.8L255.9 308.8M-449.5 357.8L341.5 308.8M1008.1 356.1L263.4 308.4M-449.7 356.1L334.4 308.4M1009.6 354.4L270.7 308.0M-449.9 354.4L327.5 308.0M1011.1 352.8L277.9 307.6M-450.0 352.8L320.6 307.6M1012.6 351.2L284.9 307.2M-450.2 351.2L313.8 307.2M1013.9 349.7L291.9 306.8M-450.3 349.7L307.2 306.8M1015.3 348.3L298.7 306.4M-450.5 348.3L300.7 306.4" fill="none" stroke="#c9d0d0" stroke-opacity=".38" stroke-width="1"/></g>
<polygon points="292.2,448.7 285.9,447.1 285.2,368.0 291.6,368.9" fill="#7e7e7e"/>
<polygon points="292.2,448.7 285.9,447.1 285.2,368.0 291.6,368.9" fill="url(#pv)"/>
<polygon points="292.2,448.7 298.9,447.1 298.5,368.0 291.6,368.9" fill="#8f8f8f"/>
<polygon points="292.2,448.7 298.9,447.1 298.5,368.0 291.6,368.9" fill="url(#pv)"/>
<polygon points="291.6,368.9 298.5,368.0 292.1,367.1 285.2,368.0" fill="#777"/>
<polygon points="334.7,384.6 291.9,378.0 291.9,368.9 334.8,374.9" fill="#868686"/>
<polygon points="334.7,384.6 291.9,378.0 291.9,368.9 334.8,374.9" fill="url(#ph2)"/>
<polygon points="334.7,384.6 339.3,383.9 339.3,374.3 334.8,374.9" fill="#8e8e8e"/>
<polygon points="334.7,384.6 339.3,383.9 339.3,374.3 334.8,374.9" fill="url(#ph)"/>
<polygon points="334.8,374.9 339.3,374.3 296.4,368.2 291.9,368.9" fill="#767a7a"/>
<polygon points="340.4,461.1 333.3,459.3 333.6,375.1 340.9,376.2" fill="#7e7e7e"/>
<polygon points="340.4,461.1 333.3,459.3 333.6,375.1 340.9,376.2" fill="url(#pv)"/>
<polygon points="340.4,461.1 347.1,459.3 347.7,375.1 340.9,376.2" fill="#8f8f8f"/>
<polygon points="340.4,461.1 347.1,459.3 347.7,375.1 340.9,376.2" fill="url(#pv)"/>
<polygon points="340.9,376.2 347.7,375.1 340.5,374.1 333.6,375.1" fill="#777"/>
<polygon points="167.5,465.4 160.2,463.0 156.7,377.3 164.1,378.7" fill="#7c7c7c"/>
<polygon points="167.5,465.4 160.2,463.0 156.7,377.3 164.1,378.7" fill="url(#pv)"/>
<polygon points="167.5,465.4 194.0,459.6 191.3,375.3 164.1,378.7" fill="#949494"/>
<polygon points="167.5,465.4 194.0,459.6 191.3,375.3 164.1,378.7" fill="url(#pv)"/>
<polygon points="164.1,378.7 191.3,375.3 183.7,373.9 156.7,377.3" fill="#777"/>
<polygon points="431.6,399.5 342.0,385.7 342.0,376.0 431.9,388.8" fill="#868686"/>
<polygon points="431.6,399.5 342.0,385.7 342.0,376.0 431.9,388.8" fill="url(#ph2)"/>
<polygon points="431.6,399.5 436.1,398.6 436.4,387.9 431.9,388.8" fill="#8e8e8e"/>
<polygon points="431.6,399.5 436.1,398.6 436.4,387.9 431.9,388.8" fill="url(#ph)"/>
<polygon points="431.9,388.8 436.4,387.9 346.6,375.3 342.0,376.0" fill="#767a7a"/>
<polygon points="244.3,401.3 239.5,400.4 239.3,389.5 244.1,390.4" fill="#868686"/>
<polygon points="244.3,401.3 239.5,400.4 239.3,389.5 244.1,390.4" fill="url(#ph2)"/>
<polygon points="244.3,401.3 339.6,385.7 339.7,376.0 244.1,390.4" fill="#8e8e8e"/>
<polygon points="244.3,401.3 339.6,385.7 339.7,376.0 244.1,390.4" fill="url(#ph)"/>
<polygon points="244.1,390.4 339.7,376.0 334.8,375.3 239.3,389.5" fill="#767a7a"/>
<polygon points="231.0,401.3 166.6,388.3 166.3,378.4 230.8,390.4" fill="#868686"/>
<polygon points="231.0,401.3 166.6,388.3 166.3,378.4 230.8,390.4" fill="url(#ph2)"/>
<polygon points="231.0,401.3 236.9,400.4 236.7,389.5 230.8,390.4" fill="#8e8e8e"/>
<polygon points="231.0,401.3 236.9,400.4 236.7,389.5 230.8,390.4" fill="url(#ph)"/>
<polygon points="230.8,390.4 236.7,389.5 172.0,377.7 166.3,378.4" fill="#767a7a"/>
<polygon points="229.0,390.6 156.3,377.1 156.2,375.1 228.9,388.4" fill="#848686"/>
<polygon points="229.0,390.6 156.3,377.1 156.2,375.1 228.9,388.4" fill="url(#ph2)"/>
<polygon points="229.0,390.6 340.7,374.1 340.7,372.1 228.9,388.4" fill="#8c8e8e"/>
<polygon points="229.0,390.6 340.7,374.1 340.7,372.1 228.9,388.4" fill="url(#ph)"/>
<polygon points="228.9,388.4 340.7,372.1 266.1,361.8 156.2,375.1" fill="#6e7474"/>
<polygon points="87.3,401.2 83.6,400.2 82.8,387.2 86.6,388.0" fill="#868686"/>
<polygon points="87.3,401.2 83.6,400.2 82.8,387.2 86.6,388.0" fill="url(#ph2)"/>
<polygon points="87.3,401.2 172.3,389.5 171.8,377.4 86.6,388.0" fill="#8e8e8e"/>
<polygon points="87.3,401.2 172.3,389.5 171.8,377.4 86.6,388.0" fill="url(#ph)"/>
<polygon points="86.6,388.0 171.8,377.4 167.9,376.7 82.8,387.2" fill="#767a7a"/>
<polygon points="437.0,485.2 428.1,482.9 430.8,389.0 439.9,390.3" fill="#7e7e7e"/>
<polygon points="437.0,485.2 428.1,482.9 430.8,389.0 439.9,390.3" fill="url(#pv)"/>
<polygon points="437.0,485.2 443.6,482.9 446.6,389.0 439.9,390.3" fill="#8f8f8f"/>
<polygon points="437.0,485.2 443.6,482.9 446.6,389.0 439.9,390.3" fill="url(#pv)"/>
<polygon points="439.9,390.3 446.6,389.0 437.5,387.7 430.8,389.0" fill="#777"/>
<polygon points="83.0,487.8 77.5,485.5 71.4,388.2 77.0,389.6" fill="#7e7e7e"/>
<polygon points="83.0,487.8 77.5,485.5 71.4,388.2 77.0,389.6" fill="url(#pv)"/>
<polygon points="83.0,487.8 93.2,485.5 87.5,388.2 77.0,389.6" fill="#8f8f8f"/>
<polygon points="83.0,487.8 93.2,485.5 87.5,388.2 77.0,389.6" fill="url(#pv)"/>
<polygon points="77.0,389.6 87.5,388.2 81.9,387.0 71.4,388.2" fill="#777"/>
<polygon points="238.5,488.0 231.4,485.7 229.3,390.6 236.5,391.9" fill="#7e7e7e"/>
<polygon points="238.5,488.0 231.4,485.7 229.3,390.6 236.5,391.9" fill="url(#pv)"/>
<polygon points="238.5,488.0 247.1,485.7 245.3,390.6 236.5,391.9" fill="#8f8f8f"/>
<polygon points="238.5,488.0 247.1,485.7 245.3,390.6 236.5,391.9" fill="url(#pv)"/>
<polygon points="236.5,391.9 245.3,390.6 238.1,389.3 229.3,390.6" fill="#777"/>
<polygon points="134.2,416.9 79.5,402.6 78.7,389.3 133.6,402.3" fill="#868686"/>
<polygon points="134.2,416.9 79.5,402.6 78.7,389.3 133.6,402.3" fill="url(#ph2)"/>
<polygon points="134.2,416.9 141.5,415.7 140.9,401.2 133.6,402.3" fill="#8e8e8e"/>
<polygon points="134.2,416.9 141.5,415.7 140.9,401.2 133.6,402.3" fill="url(#ph)"/>
<polygon points="133.6,402.3 140.9,401.2 85.8,388.5 78.7,389.3" fill="#767a7a"/>
<polygon points="149.1,416.9 144.5,415.7 143.9,403.7 148.6,404.8" fill="#868686"/>
<polygon points="149.1,416.9 144.5,415.7 143.9,403.7 148.6,404.8" fill="url(#ph2)"/>
<polygon points="149.1,416.9 235.5,402.7 235.3,391.7 148.6,404.8" fill="#8e8e8e"/>
<polygon points="149.1,416.9 235.5,402.7 235.3,391.7 148.6,404.8" fill="url(#ph)"/>
<polygon points="148.6,404.8 235.3,391.7 230.5,390.8 143.9,403.7" fill="#767a7a"/>
<polygon points="344.6,420.7 338.4,419.5 338.4,407.2 344.7,408.3" fill="#868686"/>
<polygon points="344.6,420.7 338.4,419.5 338.4,407.2 344.7,408.3" fill="url(#ph2)"/>
<polygon points="344.6,420.7 438.1,401.0 438.4,390.1 344.7,408.3" fill="#8e8e8e"/>
<polygon points="344.6,420.7 438.1,401.0 438.4,390.1 344.7,408.3" fill="url(#ph)"/>
<polygon points="344.7,408.3 438.4,390.1 432.3,389.2 338.4,407.2" fill="#767a7a"/>
<polygon points="327.2,420.7 238.2,402.7 238.0,391.7 327.2,408.3" fill="#868686"/>
<polygon points="327.2,420.7 238.2,402.7 238.0,391.7 327.2,408.3" fill="url(#ph2)"/>
<polygon points="327.2,420.7 333.1,419.5 333.2,407.2 327.2,408.3" fill="#8e8e8e"/>
<polygon points="327.2,420.7 333.1,419.5 333.2,407.2 327.2,408.3" fill="url(#ph)"/>
<polygon points="327.2,408.3 333.2,407.2 243.9,390.8 238.0,391.7" fill="#767a7a"/>
<polygon points="143.6,513.0 136.8,510.2 131.8,405.1 138.7,406.7" fill="#7e7e7e"/>
<polygon points="143.6,513.0 136.8,510.2 131.8,405.1 138.7,406.7" fill="url(#pv)"/>
<polygon points="143.6,513.0 154.2,510.2 149.7,405.1 138.7,406.7" fill="#8f8f8f"/>
<polygon points="143.6,513.0 154.2,510.2 149.7,405.1 138.7,406.7" fill="url(#pv)"/>
<polygon points="138.7,406.7 149.7,405.1 142.8,403.4 131.8,405.1" fill="#777"/>
<polygon points="335.8,520.2 324.4,516.5 324.6,408.8 336.3,411.0" fill="#7e7e7e"/>
<polygon points="335.8,520.2 324.4,516.5 324.6,408.8 336.3,411.0" fill="url(#pv)"/>
<polygon points="335.8,520.2 346.6,516.5 347.4,408.8 336.3,411.0" fill="#8f8f8f"/>
<polygon points="335.8,520.2 346.6,516.5 347.4,408.8 336.3,411.0" fill="url(#pv)"/>
<polygon points="336.3,411.0 347.4,408.8 335.8,406.7 324.6,408.8" fill="#777"/>
<polygon points="228.8,441.5 141.1,418.7 140.6,406.4 228.5,427.6" fill="#868686"/>
<polygon points="228.8,441.5 141.1,418.7 140.6,406.4 228.5,427.6" fill="url(#ph2)"/>
<polygon points="228.8,441.5 236.4,440.0 236.1,426.1 228.5,427.6" fill="#8e8e8e"/>
<polygon points="228.8,441.5 236.4,440.0 236.1,426.1 228.5,427.6" fill="url(#ph)"/>
<polygon points="228.5,427.6 236.1,426.1 147.9,405.3 140.6,406.4" fill="#767a7a"/>
<polygon points="246.0,441.5 239.8,440.0 239.5,426.1 245.7,427.6" fill="#868686"/>
<polygon points="246.0,441.5 239.8,440.0 239.5,426.1 245.7,427.6" fill="url(#ph2)"/>
<polygon points="246.0,441.5 333.5,423.0 333.5,410.5 245.7,427.6" fill="#8e8e8e"/>
<polygon points="246.0,441.5 333.5,423.0 333.5,410.5 245.7,427.6" fill="url(#ph)"/>
<polygon points="245.7,427.6 333.5,410.5 327.3,409.3 239.5,426.1" fill="#767a7a"/>
<polygon points="238.4,552.5 229.4,548.7 226.5,428.0 235.8,430.2" fill="#7e7e7e"/>
<polygon points="238.4,552.5 229.4,548.7 226.5,428.0 235.8,430.2" fill="url(#pv)"/>
<polygon points="238.4,552.5 249.5,548.7 247.3,428.0 235.8,430.2" fill="#8f8f8f"/>
<polygon points="238.4,552.5 249.5,548.7 247.3,428.0 235.8,430.2" fill="url(#pv)"/>
<polygon points="235.8,430.2 247.3,428.0 238.0,425.8 226.5,428.0" fill="#777"/>
<polygon points="235.7,430.4 131.5,405.1 131.3,402.6 235.7,427.5" fill="#848686"/>
<polygon points="235.7,430.4 131.5,405.1 131.3,402.6 235.7,427.5" fill="url(#ph2)"/>
<polygon points="235.7,430.4 447.2,389.0 447.2,386.8 235.7,427.5" fill="#8c8e8e"/>
<polygon points="235.7,430.4 447.2,389.0 447.2,386.8 235.7,427.5" fill="url(#ph)"/>
<polygon points="235.7,427.5 447.2,386.8 340.7,372.1 131.3,402.6" fill="#6e7474"/>
<polygon points="301.8,98.5 115.0,138.7 114.9,136.3 301.7,95.3" fill="#848686"/>
<polygon points="301.8,98.5 115.0,138.7 114.9,136.3 301.7,95.3" fill="url(#ph2)"/>
<polygon points="301.8,98.5 456.9,130.5 457.0,128.0 301.7,95.3" fill="#8c8e8e"/>
<polygon points="301.8,98.5 456.9,130.5 457.0,128.0 301.7,95.3" fill="url(#ph)"/>
<polygon points="301.8,98.5 456.9,130.5 266.9,157.8 115.0,138.7" fill="#6a7070"/>
<polygon points="290.7,224.5 284.0,224.8 283.4,153.3 290.2,152.3" fill="#7e7e7e"/>
<polygon points="290.7,224.5 284.0,224.8 283.4,153.3 290.2,152.3" fill="url(#pv)"/>
<polygon points="290.7,224.5 297.8,224.8 297.4,153.3 290.2,152.3" fill="#8f8f8f"/>
<polygon points="290.7,224.5 297.8,224.8 297.4,153.3 290.2,152.3" fill="url(#pv)"/>
<polygon points="290.7,224.5 297.8,224.8 291.1,225.1 284.0,224.8" fill="#777"/>
<polygon points="291.6,367.0 285.2,366.1 284.7,298.6 291.2,298.9" fill="#7e7e7e"/>
<polygon points="291.6,367.0 285.2,366.1 284.7,298.6 291.2,298.9" fill="url(#pv)"/>
<polygon points="291.6,367.0 298.5,366.1 298.1,298.6 291.2,298.9" fill="#8f8f8f"/>
<polygon points="291.6,367.0 298.5,366.1 298.1,298.6 291.2,298.9" fill="url(#pv)"/>
<polygon points="291.2,298.9 298.1,298.6 291.6,298.3 284.7,298.6" fill="#777"/>
<polygon points="335.7,156.5 290.5,162.5 290.4,152.3 335.7,145.7" fill="#868686"/>
<polygon points="335.7,156.5 290.5,162.5 290.4,152.3 335.7,145.7" fill="url(#ph2)"/>
<polygon points="335.7,156.5 340.5,157.1 340.6,146.4 335.7,145.7" fill="#8e8e8e"/>
<polygon points="335.7,156.5 340.5,157.1 340.6,146.4 335.7,145.7" fill="url(#ph)"/>
<polygon points="335.7,156.5 340.5,157.1 295.3,163.1 290.5,162.5" fill="#676969"/>
<polygon points="335.0,311.1 291.5,308.4 291.4,298.9 335.1,301.1" fill="#868686"/>
<polygon points="335.0,311.1 291.5,308.4 291.4,298.9 335.1,301.1" fill="url(#ph2)"/>
<polygon points="335.0,311.1 339.7,310.8 339.7,300.8 335.1,301.1" fill="#8e8e8e"/>
<polygon points="335.0,311.1 339.7,310.8 339.7,300.8 335.1,301.1" fill="url(#ph)"/>
<polygon points="335.1,301.1 339.7,300.8 296.1,298.7 291.4,298.9" fill="#767a7a"/>
<polygon points="341.8,221.8 334.2,222.2 334.5,145.5 342.2,144.3" fill="#7e7e7e"/>
<polygon points="341.8,221.8 334.2,222.2 334.5,145.5 342.2,144.3" fill="url(#pv)"/>
<polygon points="341.8,221.8 348.9,222.2 349.5,145.5 342.2,144.3" fill="#8f8f8f"/>
<polygon points="341.8,221.8 348.9,222.2 349.5,145.5 342.2,144.3" fill="url(#pv)"/>
<polygon points="341.8,221.8 348.9,222.2 341.3,222.5 334.2,222.2" fill="#777"/>
<polygon points="340.9,374.2 333.6,373.1 333.9,301.1 341.3,301.5" fill="#7e7e7e"/>
<polygon points="340.9,374.2 333.6,373.1 333.9,301.1 341.3,301.5" fill="url(#pv)"/>
<polygon points="340.9,374.2 347.8,373.1 348.3,301.1 341.3,301.5" fill="#8f8f8f"/>
<polygon points="340.9,374.2 347.8,373.1 348.3,301.1 341.3,301.5" fill="url(#pv)"/>
<polygon points="341.3,301.5 348.3,301.1 340.9,300.8 333.9,301.1" fill="#777"/>
<polygon points="158.0,220.9 150.3,221.4 147.1,143.1 154.9,141.6" fill="#7c7c7c"/>
<polygon points="158.0,220.9 150.3,221.4 147.1,143.1 154.9,141.6" fill="url(#pv)"/>
<polygon points="158.0,220.9 186.3,222.1 183.9,145.3 154.9,141.6" fill="#949494"/>
<polygon points="158.0,220.9 186.3,222.1 183.9,145.3 154.9,141.6" fill="url(#pv)"/>
<polygon points="158.0,220.9 186.3,222.1 178.6,222.6 150.3,221.4" fill="#777"/>
<polygon points="164.0,376.6 156.6,375.2 153.6,301.9 161.1,302.4" fill="#7c7c7c"/>
<polygon points="164.0,376.6 156.6,375.2 153.6,301.9 161.1,302.4" fill="url(#pv)"/>
<polygon points="164.0,376.6 191.2,373.3 188.9,301.2 161.1,302.4" fill="#949494"/>
<polygon points="164.0,376.6 191.2,373.3 188.9,301.2 161.1,302.4" fill="url(#pv)"/>
<polygon points="161.1,302.4 188.9,301.2 181.2,300.7 153.6,301.9" fill="#777"/>
<polygon points="439.0,142.7 343.4,155.4 343.5,144.5 439.4,130.5" fill="#868686"/>
<polygon points="439.0,142.7 343.4,155.4 343.5,144.5 439.4,130.5" fill="url(#ph2)"/>
<polygon points="439.0,142.7 443.7,143.6 444.1,131.4 439.4,130.5" fill="#8e8e8e"/>
<polygon points="439.0,142.7 443.7,143.6 444.1,131.4 439.4,130.5" fill="url(#ph)"/>
<polygon points="439.0,142.7 443.7,143.6 348.2,156.1 343.4,155.4" fill="#676969"/>
<polygon points="434.0,317.2 342.4,311.5 342.5,301.4 434.3,305.9" fill="#868686"/>
<polygon points="434.0,317.2 342.4,311.5 342.5,301.4 434.3,305.9" fill="url(#ph2)"/>
<polygon points="434.0,317.2 438.5,316.8 438.9,305.6 434.3,305.9" fill="#8e8e8e"/>
<polygon points="434.0,317.2 438.5,316.8 438.9,305.6 434.3,305.9" fill="url(#ph)"/>
<polygon points="434.3,305.9 438.9,305.6 347.2,301.2 342.5,301.4" fill="#767a7a"/>
<polygon points="239.4,141.1 234.4,142.0 234.1,129.6 239.2,128.7" fill="#868686"/>
<polygon points="239.4,141.1 234.4,142.0 234.1,129.6 239.2,128.7" fill="url(#ph2)"/>
<polygon points="239.4,141.1 340.9,155.4 340.9,144.5 239.2,128.7" fill="#8e8e8e"/>
<polygon points="239.4,141.1 340.9,155.4 340.9,144.5 239.2,128.7" fill="url(#ph)"/>
<polygon points="239.4,141.1 340.9,155.4 335.7,156.1 234.4,142.0" fill="#676969"/>
<polygon points="242.8,317.9 237.9,317.5 237.7,306.2 242.6,306.5" fill="#868686"/>
<polygon points="242.8,317.9 237.9,317.5 237.7,306.2 242.6,306.5" fill="url(#ph2)"/>
<polygon points="242.8,317.9 340.0,311.5 340.1,301.4 242.6,306.5" fill="#8e8e8e"/>
<polygon points="242.8,317.9 340.0,311.5 340.1,301.4 242.6,306.5" fill="url(#ph)"/>
<polygon points="242.6,306.5 340.1,301.4 335.1,301.2 237.7,306.2" fill="#767a7a"/>
<polygon points="225.2,141.1 157.6,153.1 157.1,141.9 224.9,128.7" fill="#868686"/>
<polygon points="225.2,141.1 157.6,153.1 157.1,141.9 224.9,128.7" fill="url(#ph2)"/>
<polygon points="225.2,141.1 231.5,142.0 231.3,129.6 224.9,128.7" fill="#8e8e8e"/>
<polygon points="225.2,141.1 231.5,142.0 231.3,129.6 224.9,128.7" fill="url(#ph)"/>
<polygon points="225.2,141.1 231.5,142.0 163.7,153.8 157.6,153.1" fill="#676969"/>
<polygon points="229.2,317.9 163.7,312.6 163.3,302.3 228.9,306.5" fill="#868686"/>
<polygon points="229.2,317.9 163.7,312.6 163.3,302.3 228.9,306.5" fill="url(#ph2)"/>
<polygon points="229.2,317.9 235.2,317.5 234.9,306.2 228.9,306.5" fill="#8e8e8e"/>
<polygon points="229.2,317.9 235.2,317.5 234.9,306.2 228.9,306.5" fill="url(#ph)"/>
<polygon points="228.9,306.5 234.9,306.2 169.2,302.0 163.3,302.3" fill="#767a7a"/>
<polygon points="225.1,218.9 150.0,223.6 149.9,221.5 225.0,216.4" fill="#848686"/>
<polygon points="225.1,218.9 150.0,223.6 149.9,221.5 225.0,216.4" fill="url(#ph2)"/>
<polygon points="225.1,218.9 341.6,224.7 341.6,222.6 225.0,216.4" fill="#8c8e8e"/>
<polygon points="225.1,218.9 341.6,224.7 341.6,222.6 225.0,216.4" fill="url(#ph)"/>
<polygon points="225.1,218.9 341.6,224.7 264.3,228.3 150.0,223.6" fill="#6a7070"/>
<polygon points="227.1,306.6 153.2,301.8 153.1,299.7 227.0,304.3" fill="#848686"/>
<polygon points="227.1,306.6 153.2,301.8 153.1,299.7 227.0,304.3" fill="url(#ph2)"/>
<polygon points="227.1,306.6 341.1,300.8 341.1,298.7 227.0,304.3" fill="#8c8e8e"/>
<polygon points="227.1,306.6 341.1,300.8 341.1,298.7 227.0,304.3" fill="url(#ph)"/>
<polygon points="227.0,304.3 341.1,298.7 265.2,295.3 153.1,299.7" fill="#6e7474"/>
<polygon points="291.1,297.0 284.6,296.7 284.1,226.8 290.7,226.5" fill="#7e7e7e"/>
<polygon points="291.1,297.0 284.6,296.7 284.1,226.8 290.7,226.5" fill="url(#pv)"/>
<polygon points="291.1,297.0 298.1,296.7 297.8,226.8 290.7,226.5" fill="#8f8f8f"/>
<polygon points="291.1,297.0 298.1,296.7 297.8,226.8 290.7,226.5" fill="url(#pv)"/>
<polygon points="335.4,234.8 291.0,236.3 290.9,226.5 335.4,224.4" fill="#868686"/>
<polygon points="335.4,234.8 291.0,236.3 290.9,226.5 335.4,224.4" fill="url(#ph2)"/>
<polygon points="335.4,234.8 340.1,234.9 340.1,224.6 335.4,224.4" fill="#8e8e8e"/>
<polygon points="335.4,234.8 340.1,234.9 340.1,224.6 335.4,224.4" fill="url(#ph)"/>
<polygon points="335.4,234.8 340.1,234.9 295.7,236.4 291.0,236.3" fill="#676969"/>
<polygon points="161.1,300.2 153.5,299.8 150.4,223.6 158.0,223.1" fill="#7c7c7c"/>
<polygon points="161.1,300.2 153.5,299.8 150.4,223.6 158.0,223.1" fill="url(#pv)"/>
<polygon points="161.1,300.2 188.8,299.1 186.4,224.3 158.0,223.1" fill="#949494"/>
<polygon points="161.1,300.2 188.8,299.1 186.4,224.3 158.0,223.1" fill="url(#pv)"/>
<polygon points="227.2,230.9 160.7,233.9 160.3,223.2 227.0,219.0" fill="#868686"/>
<polygon points="227.2,230.9 160.7,233.9 160.3,223.2 227.0,219.0" fill="url(#ph2)"/>
<polygon points="227.2,230.9 233.4,231.1 233.1,219.3 227.0,219.0" fill="#8e8e8e"/>
<polygon points="227.2,230.9 233.4,231.1 233.1,219.3 227.0,219.0" fill="url(#ph)"/>
<polygon points="227.2,230.9 233.4,231.1 166.7,234.1 160.7,233.9" fill="#676969"/>
<polygon points="82.4,317.8 78.7,317.5 77.8,303.8 81.6,304.1" fill="#868686"/>
<polygon points="82.4,317.8 78.7,317.5 77.8,303.8 81.6,304.1" fill="url(#ph2)"/>
<polygon points="82.4,317.8 169.4,313.1 169.0,300.5 81.6,304.1" fill="#8e8e8e"/>
<polygon points="82.4,317.8 169.4,313.1 169.0,300.5 81.6,304.1" fill="url(#ph)"/>
<polygon points="81.6,304.1 169.0,300.5 165.0,300.3 77.8,303.8" fill="#767a7a"/>
<polygon points="77.3,230.9 73.5,231.1 72.6,216.9 76.5,216.6" fill="#868686"/>
<polygon points="77.3,230.9 73.5,231.1 72.6,216.9 76.5,216.6" fill="url(#ph2)"/>
<polygon points="77.3,230.9 166.5,233.6 166.0,220.6 76.5,216.6" fill="#8e8e8e"/>
<polygon points="77.3,230.9 166.5,233.6 166.0,220.6 76.5,216.6" fill="url(#ph)"/>
<polygon points="77.3,230.9 166.5,233.6 162.4,233.8 73.5,231.1" fill="#676969"/>
<polygon points="445.3,216.6 435.7,217.1 438.2,130.2 448.1,128.8" fill="#7e7e7e"/>
<polygon points="445.3,216.6 435.7,217.1 438.2,130.2 448.1,128.8" fill="url(#pv)"/>
<polygon points="445.3,216.6 452.3,217.1 455.1,130.2 448.1,128.8" fill="#8f8f8f"/>
<polygon points="445.3,216.6 452.3,217.1 455.1,130.2 448.1,128.8" fill="url(#pv)"/>
<polygon points="445.3,216.6 452.3,217.1 442.7,217.5 435.7,217.1" fill="#777"/>
<polygon points="440.0,388.0 430.8,386.8 433.1,306.0 442.6,306.5" fill="#7e7e7e"/>
<polygon points="440.0,388.0 430.8,386.8 433.1,306.0 442.6,306.5" fill="url(#pv)"/>
<polygon points="440.0,388.0 446.7,386.8 449.4,306.0 442.6,306.5" fill="#8f8f8f"/>
<polygon points="440.0,388.0 446.7,386.8 449.4,306.0 442.6,306.5" fill="url(#pv)"/>
<polygon points="442.6,306.5 449.4,306.0 440.0,305.6 433.1,306.0" fill="#777"/>
<polygon points="77.0,389.6 71.4,388.2 66.2,304.2 71.8,304.7" fill="#7e7e7e"/>
<polygon points="77.0,389.6 71.4,388.2 66.2,304.2 71.8,304.7" fill="url(#pv)"/>
<polygon points="77.0,389.6 87.5,388.2 82.6,304.2 71.8,304.7" fill="#8f8f8f"/>
<polygon points="77.0,389.6 87.5,388.2 82.6,304.2 71.8,304.7" fill="url(#pv)"/>
<polygon points="71.8,304.7 82.6,304.2 76.9,303.8 66.2,304.2" fill="#777"/>
<polygon points="71.8,304.7 66.2,304.2 60.7,216.5 66.3,216.0" fill="#7e7e7e"/>
<polygon points="71.8,304.7 66.2,304.2 60.7,216.5 66.3,216.0" fill="url(#pv)"/>
<polygon points="71.8,304.7 82.6,304.2 77.4,216.5 66.3,216.0" fill="#8f8f8f"/>
<polygon points="71.8,304.7 82.6,304.2 77.4,216.5 66.3,216.0" fill="url(#pv)"/>
<polygon points="232.8,215.9 225.3,216.4 223.3,128.4 231.0,126.9" fill="#7e7e7e"/>
<polygon points="232.8,215.9 225.3,216.4 223.3,128.4 231.0,126.9" fill="url(#pv)"/>
<polygon points="232.8,215.9 242.1,216.4 240.5,128.4 231.0,126.9" fill="#8f8f8f"/>
<polygon points="232.8,215.9 242.1,216.4 240.5,128.4 231.0,126.9" fill="url(#pv)"/>
<polygon points="232.8,215.9 242.1,216.4 234.6,216.9 225.3,216.4" fill="#777"/>
<polygon points="236.4,389.7 229.2,388.4 227.4,306.6 234.7,307.1" fill="#7e7e7e"/>
<polygon points="236.4,389.7 229.2,388.4 227.4,306.6 234.7,307.1" fill="url(#pv)"/>
<polygon points="236.4,389.7 245.3,388.4 243.8,306.6 234.7,307.1" fill="#8f8f8f"/>
<polygon points="236.4,389.7 245.3,388.4 243.8,306.6 234.7,307.1" fill="url(#pv)"/>
<polygon points="234.7,307.1 243.8,306.6 236.4,306.1 227.4,306.6" fill="#777"/>
<polygon points="129.9,324.3 74.4,318.4 73.6,304.6 129.2,309.0" fill="#868686"/>
<polygon points="129.9,324.3 74.4,318.4 73.6,304.6 129.2,309.0" fill="url(#ph2)"/>
<polygon points="129.9,324.3 137.4,323.8 136.7,308.6 129.2,309.0" fill="#8e8e8e"/>
<polygon points="129.9,324.3 137.4,323.8 136.7,308.6 129.2,309.0" fill="url(#ph)"/>
<polygon points="129.2,309.0 136.7,308.6 80.8,304.3 73.6,304.6" fill="#767a7a"/>
<polygon points="125.3,227.2 69.1,230.6 68.2,216.1 124.6,211.2" fill="#868686"/>
<polygon points="125.3,227.2 69.1,230.6 68.2,216.1 124.6,211.2" fill="url(#ph2)"/>
<polygon points="125.3,227.2 133.0,227.5 132.3,211.6 124.6,211.2" fill="#8e8e8e"/>
<polygon points="125.3,227.2 133.0,227.5 132.3,211.6 124.6,211.2" fill="url(#ph)"/>
<polygon points="125.3,227.2 133.0,227.5 76.4,230.8 69.1,230.6" fill="#676969"/>
<polygon points="145.1,324.3 140.4,323.8 139.8,311.2 144.5,311.6" fill="#868686"/>
<polygon points="145.1,324.3 140.4,323.8 139.8,311.2 144.5,311.6" fill="url(#ph2)"/>
<polygon points="145.1,324.3 233.7,318.5 233.5,307.0 144.5,311.6" fill="#8e8e8e"/>
<polygon points="145.1,324.3 233.7,318.5 233.5,307.0 144.5,311.6" fill="url(#ph)"/>
<polygon points="144.5,311.6 233.5,307.0 228.6,306.7 139.8,311.2" fill="#767a7a"/>
<polygon points="346.6,122.9 339.9,124.1 340.0,109.9 346.7,108.6" fill="#868686"/>
<polygon points="346.6,122.9 339.9,124.1 340.0,109.9 346.7,108.6" fill="url(#ph2)"/>
<polygon points="346.6,122.9 446.0,141.4 446.4,129.0 346.7,108.6" fill="#8e8e8e"/>
<polygon points="346.6,122.9 446.0,141.4 446.4,129.0 346.7,108.6" fill="url(#ph)"/>
<polygon points="346.6,122.9 446.0,141.4 439.5,142.3 339.9,124.1" fill="#676969"/>
<polygon points="345.3,325.9 338.9,325.3 338.9,312.5 345.4,312.9" fill="#868686"/>
<polygon points="345.3,325.9 338.9,325.3 338.9,312.5 345.4,312.9" fill="url(#ph2)"/>
<polygon points="345.3,325.9 440.6,317.8 441.0,306.4 345.4,312.9" fill="#8e8e8e"/>
<polygon points="345.3,325.9 440.6,317.8 441.0,306.4 345.4,312.9" fill="url(#ph)"/>
<polygon points="345.4,312.9 441.0,306.4 434.7,306.1 338.9,312.5" fill="#767a7a"/>
<polygon points="327.9,122.9 232.8,139.7 232.6,127.2 327.9,108.6" fill="#868686"/>
<polygon points="327.9,122.9 232.8,139.7 232.6,127.2 327.9,108.6" fill="url(#ph2)"/>
<polygon points="327.9,122.9 334.3,124.1 334.4,109.9 327.9,108.6" fill="#8e8e8e"/>
<polygon points="327.9,122.9 334.3,124.1 334.4,109.9 327.9,108.6" fill="url(#ph)"/>
<polygon points="327.9,122.9 334.3,124.1 239.2,140.6 232.8,139.7" fill="#676969"/>
<polygon points="327.4,325.9 236.5,318.5 236.2,307.0 327.4,312.9" fill="#868686"/>
<polygon points="327.4,325.9 236.5,318.5 236.2,307.0 327.4,312.9" fill="url(#ph2)"/>
<polygon points="327.4,325.9 333.5,325.3 333.6,312.5 327.4,312.9" fill="#8e8e8e"/>
<polygon points="327.4,325.9 333.5,325.3 333.6,312.5 327.4,312.9" fill="url(#ph)"/>
<polygon points="327.4,312.9 333.6,312.5 242.3,306.7 236.2,307.0" fill="#767a7a"/>
<polygon points="138.6,404.2 131.7,402.6 127.4,311.7 134.4,312.3" fill="#7e7e7e"/>
<polygon points="138.6,404.2 131.7,402.6 127.4,311.7 134.4,312.3" fill="url(#pv)"/>
<polygon points="138.6,404.2 149.6,402.6 145.7,311.7 134.4,312.3" fill="#8f8f8f"/>
<polygon points="138.6,404.2 149.6,402.6 145.7,311.7 134.4,312.3" fill="url(#pv)"/>
<polygon points="134.4,312.3 145.7,311.7 138.7,311.1 127.4,311.7" fill="#777"/>
<polygon points="337.2,208.8 324.9,209.6 325.1,108.0 337.7,105.5" fill="#7e7e7e"/>
<polygon points="337.2,208.8 324.9,209.6 325.1,108.0 337.7,105.5" fill="url(#pv)"/>
<polygon points="337.2,208.8 348.9,209.6 349.7,108.0 337.7,105.5" fill="#8f8f8f"/>
<polygon points="337.2,208.8 348.9,209.6 349.7,108.0 337.7,105.5" fill="url(#pv)"/>
<polygon points="337.2,208.8 348.9,209.6 336.6,210.4 324.9,209.6" fill="#777"/>
<polygon points="336.3,408.4 324.6,406.3 324.8,313.0 336.7,313.8" fill="#7e7e7e"/>
<polygon points="336.3,408.4 324.6,406.3 324.8,313.0 336.7,313.8" fill="url(#pv)"/>
<polygon points="336.3,408.4 347.5,406.3 348.2,313.0 336.7,313.8" fill="#8f8f8f"/>
<polygon points="336.3,408.4 347.5,406.3 348.2,313.0 336.7,313.8" fill="url(#pv)"/>
<polygon points="336.7,313.8 348.2,313.0 336.2,312.3 324.8,313.0" fill="#777"/>
<polygon points="226.3,334.5 136.9,325.0 136.3,312.2 226.0,319.7" fill="#868686"/>
<polygon points="226.3,334.5 136.9,325.0 136.3,312.2 226.0,319.7" fill="url(#ph2)"/>
<polygon points="226.3,334.5 234.1,333.8 233.8,319.2 226.0,319.7" fill="#8e8e8e"/>
<polygon points="226.3,334.5 234.1,333.8 233.8,319.2 226.0,319.7" fill="url(#ph)"/>
<polygon points="226.0,319.7 233.8,319.2 143.8,311.8 136.3,312.2" fill="#767a7a"/>
<polygon points="244.0,334.5 237.6,333.8 237.3,319.2 243.7,319.7" fill="#868686"/>
<polygon points="244.0,334.5 237.6,333.8 237.3,319.2 243.7,319.7" fill="url(#ph2)"/>
<polygon points="244.0,334.5 333.9,326.8 333.9,313.6 243.7,319.7" fill="#8e8e8e"/>
<polygon points="244.0,334.5 333.9,326.8 333.9,313.6 243.7,319.7" fill="url(#ph)"/>
<polygon points="243.7,319.7 333.9,313.6 327.5,313.2 237.3,319.2" fill="#767a7a"/>
<polygon points="235.7,427.3 226.5,425.1 224.0,319.9 233.5,320.7" fill="#7e7e7e"/>
<polygon points="235.7,427.3 226.5,425.1 224.0,319.9 233.5,320.7" fill="url(#pv)"/>
<polygon points="235.7,427.3 247.2,425.1 245.3,319.9 233.5,320.7" fill="#8f8f8f"/>
<polygon points="235.7,427.3 247.2,425.1 245.3,319.9 233.5,320.7" fill="url(#pv)"/>
<polygon points="233.5,320.7 245.3,319.9 235.8,319.1 224.0,319.9" fill="#777"/>
<polygon points="231.0,204.7 122.3,213.8 122.2,211.0 230.9,201.5" fill="#848686"/>
<polygon points="231.0,204.7 122.3,213.8 122.2,211.0 230.9,201.5" fill="url(#ph2)"/>
<polygon points="231.0,204.7 452.7,219.5 452.8,217.1 230.9,201.5" fill="#8c8e8e"/>
<polygon points="231.0,204.7 452.7,219.5 452.8,217.1 230.9,201.5" fill="url(#ph)"/>
<polygon points="231.0,204.7 452.7,219.5 341.6,224.7 122.3,213.8" fill="#6a7070"/>
<polygon points="233.4,320.7 127.0,311.7 126.9,309.1 233.3,317.6" fill="#848686"/>
<polygon points="233.4,320.7 127.0,311.7 126.9,309.1 233.3,317.6" fill="url(#ph2)"/>
<polygon points="233.4,320.7 449.9,306.0 450.0,303.7 233.3,317.6" fill="#8c8e8e"/>
<polygon points="233.4,320.7 449.9,306.0 450.0,303.7 233.3,317.6" fill="url(#ph)"/>
<polygon points="233.3,317.6 450.0,303.7 341.1,298.7 126.9,309.1" fill="#6e7474"/>
<polygon points="341.3,299.4 333.9,299.1 334.2,224.3 341.8,223.9" fill="#7e7e7e"/>
<polygon points="341.3,299.4 333.9,299.1 334.2,224.3 341.8,223.9" fill="url(#pv)"/>
<polygon points="341.3,299.4 348.3,299.1 348.9,224.3 341.8,223.9" fill="#8f8f8f"/>
<polygon points="341.3,299.4 348.3,299.1 348.9,224.3 341.8,223.9" fill="url(#pv)"/>
<polygon points="436.5,231.3 342.9,234.5 343.0,224.0 436.8,219.5" fill="#868686"/>
<polygon points="436.5,231.3 342.9,234.5 343.0,224.0 436.8,219.5" fill="url(#ph2)"/>
<polygon points="436.5,231.3 441.1,231.5 441.4,219.8 436.8,219.5" fill="#8e8e8e"/>
<polygon points="436.5,231.3 441.1,231.5 441.4,219.8 436.8,219.5" fill="url(#ph)"/>
<polygon points="436.5,231.3 441.1,231.5 347.6,234.7 342.9,234.5" fill="#676969"/>
<polygon points="241.1,230.9 236.2,231.1 235.9,219.3 240.9,219.0" fill="#868686"/>
<polygon points="241.1,230.9 236.2,231.1 235.9,219.3 240.9,219.0" fill="url(#ph2)"/>
<polygon points="241.1,230.9 340.4,234.5 340.5,224.0 240.9,219.0" fill="#8e8e8e"/>
<polygon points="241.1,230.9 340.4,234.5 340.5,224.0 240.9,219.0" fill="url(#ph)"/>
<polygon points="241.1,230.9 340.4,234.5 335.4,234.7 236.2,231.1" fill="#676969"/>
<polygon points="442.6,304.1 433.2,303.7 435.6,219.5 445.3,219.0" fill="#7e7e7e"/>
<polygon points="442.6,304.1 433.2,303.7 435.6,219.5 445.3,219.0" fill="url(#pv)"/>
<polygon points="442.6,304.1 449.4,303.7 452.2,219.5 445.3,219.0" fill="#8f8f8f"/>
<polygon points="442.6,304.1 449.4,303.7 452.2,219.5 445.3,219.0" fill="url(#pv)"/>
<polygon points="234.7,304.7 227.3,304.2 225.4,218.9 232.9,218.4" fill="#7e7e7e"/>
<polygon points="234.7,304.7 227.3,304.2 225.4,218.9 232.9,218.4" fill="url(#pv)"/>
<polygon points="234.7,304.7 243.8,304.2 242.2,218.9 232.9,218.4" fill="#8f8f8f"/>
<polygon points="234.7,304.7 243.8,304.2 242.2,218.9 232.9,218.4" fill="url(#pv)"/>
<polygon points="140.9,227.2 136.1,227.5 135.5,214.3 140.3,213.9" fill="#868686"/>
<polygon points="140.9,227.2 136.1,227.5 135.5,214.3 140.3,213.9" fill="url(#ph2)"/>
<polygon points="140.9,227.2 231.9,230.5 231.6,218.5 140.3,213.9" fill="#8e8e8e"/>
<polygon points="140.9,227.2 231.9,230.5 231.6,218.5 140.3,213.9" fill="url(#ph)"/>
<polygon points="140.9,227.2 231.9,230.5 226.9,230.7 136.1,227.5" fill="#676969"/>
<polygon points="345.9,226.3 339.4,226.6 339.5,213.0 346.0,212.6" fill="#868686"/>
<polygon points="345.9,226.3 339.4,226.6 339.5,213.0 346.0,212.6" fill="url(#ph2)"/>
<polygon points="345.9,226.3 443.3,230.9 443.6,219.1 346.0,212.6" fill="#8e8e8e"/>
<polygon points="345.9,226.3 443.3,230.9 443.6,219.1 346.0,212.6" fill="url(#ph)"/>
<polygon points="345.9,226.3 443.3,230.9 436.9,231.2 339.4,226.6" fill="#676969"/>
<polygon points="327.6,226.3 234.7,230.5 234.4,218.5 327.7,212.6" fill="#868686"/>
<polygon points="327.6,226.3 234.7,230.5 234.4,218.5 327.7,212.6" fill="url(#ph2)"/>
<polygon points="327.6,226.3 333.9,226.6 333.9,213.0 327.7,212.6" fill="#8e8e8e"/>
<polygon points="327.6,226.3 333.9,226.6 333.9,213.0 327.7,212.6" fill="url(#ph)"/>
<polygon points="327.6,226.3 333.9,226.6 240.9,230.7 234.7,230.5" fill="#676969"/>
<polygon points="134.3,309.7 127.3,309.1 122.7,213.8 129.8,213.2" fill="#7e7e7e"/>
<polygon points="134.3,309.7 127.3,309.1 122.7,213.8 129.8,213.2" fill="url(#pv)"/>
<polygon points="134.3,309.7 145.6,309.1 141.5,213.8 129.8,213.2" fill="#8f8f8f"/>
<polygon points="134.3,309.7 145.6,309.1 141.5,213.8 129.8,213.2" fill="url(#pv)"/>
<polygon points="336.8,311.1 324.8,310.4 324.9,212.5 337.2,211.7" fill="#7e7e7e"/>
<polygon points="336.8,311.1 324.8,310.4 324.9,212.5 337.2,211.7" fill="url(#pv)"/>
<polygon points="336.8,311.1 348.2,310.4 348.9,212.5 337.2,211.7" fill="#8f8f8f"/>
<polygon points="336.8,311.1 348.2,310.4 348.9,212.5 337.2,211.7" fill="url(#pv)"/>
<polygon points="223.7,221.3 132.4,226.8 131.8,213.3 223.3,205.7" fill="#868686"/>
<polygon points="223.7,221.3 132.4,226.8 131.8,213.3 223.3,205.7" fill="url(#ph2)"/>
<polygon points="223.7,221.3 231.8,221.7 231.5,206.2 223.3,205.7" fill="#8e8e8e"/>
<polygon points="223.7,221.3 231.8,221.7 231.5,206.2 223.3,205.7" fill="url(#ph)"/>
<polygon points="223.7,221.3 231.8,221.7 140.1,227.0 132.4,226.8" fill="#676969"/>
<polygon points="241.9,221.3 235.4,221.7 235.1,206.2 241.6,205.7" fill="#868686"/>
<polygon points="241.9,221.3 235.4,221.7 235.1,206.2 241.6,205.7" fill="url(#ph2)"/>
<polygon points="241.9,221.3 334.3,225.7 334.3,211.9 241.6,205.7" fill="#8e8e8e"/>
<polygon points="241.9,221.3 334.3,225.7 334.3,211.9 241.6,205.7" fill="url(#ph)"/>
<polygon points="241.9,221.3 334.3,225.7 327.7,226.0 235.4,221.7" fill="#676969"/>
<polygon points="233.4,317.6 223.9,316.8 221.3,205.6 231.0,204.8" fill="#7e7e7e"/>
<polygon points="233.4,317.6 223.9,316.8 221.3,205.6 231.0,204.8" fill="url(#pv)"/>
<polygon points="233.4,317.6 245.3,316.8 243.2,205.6 231.0,204.8" fill="#8f8f8f"/>
<polygon points="233.4,317.6 245.3,316.8 243.2,205.6 231.0,204.8" fill="url(#pv)"/>
<path d="M194.6 560.9 L193.1 524.0" stroke="#1414ff" stroke-width="1.2"/><polygon points="193.1,512.5 189.3,527.0 196.9,527.0" fill="#1414ff"/><path d="M194.6 560.9 L222.0 552.6" stroke="#ff1a1a" stroke-width="1.2"/><polygon points="234.0,548.0 219.8,550.0 225.8,555.0" fill="#ff1a1a"/><path d="M194.6 560.9 L174.0 552.0" stroke="#1a8c1a" stroke-width="1.2"/><polygon points="165.8,547.8 174.6,548.8 169.3,555.4" fill="#1a8c1a"/><text x="195.3" y="516.8" font-family="Liberation Sans, sans-serif" font-size="9.5" font-weight="bold" fill="#1414ff">z</text><text x="240.0" y="555.2" font-family="Liberation Sans, sans-serif" font-size="9.5" font-weight="bold" fill="#ff1a1a">x</text>
</svg>
<!-- RIGHT PANEL -->
<div class="abs" style="left:1829px;top:167px;width:79px;height:839px;border:1px solid #8a9bb7;border-radius:3px;background:linear-gradient(180deg,#f0f0f0 0%,#f0f0f0 55%,#ffffff 100%)"></div>
<svg class="abs" style="left:1852px;top:195px" width="32" height="32" viewBox="0 0 32 32"><defs><linearGradient id="gRedA" x1="0" y1="0" x2="1" y2="1"><stop offset="0" stop-color="#ffb070"/><stop offset="1" stop-color="#e02810"/></linearGradient><linearGradient id="gCube" x1="0" y1="0" x2="1" y2="1"><stop offset="0" stop-color="#6fa8f0"/><stop offset="1" stop-color="#0c3fb0"/></linearGradient></defs><path d="M9 0.500 L16.500 14 H12 V19 H6.500 V14 H1.500Z" fill="url(#gRedA)" stroke="#c82a10" stroke-width=".6"/><path d="M5 13 Q5 22 12 22 V19 L19 24 L12 28.500 V26 Q3 26 3 16Z" fill="#3fc43a" stroke="#1c8c1c" stroke-width=".6"/><path d="M16.500 17 L26 14.500 L31 17 V27 L22 31 L16.500 28Z" fill="url(#gCube)" stroke="#0a3a9c" stroke-width=".6"/><path d="M16.500 17 L26 14.500 L31 17 L22 20Z" fill="#8fc0ff"/><path d="M22 20 V31" stroke="#0a3a9c" stroke-width=".6"/></svg>
<svg class="abs" style="left:1855px;top:252px" width="26" height="31" viewBox="0 0 26 31"><path d="M3 2 L23 1 Q24.500 1 24.500 3 V26 Q24.500 28 23 28 L4 30 Q2 30 2 28 V4 Q2 2 3 2Z" fill="#f4f8ff" stroke="#2f86e8" stroke-width="2"/><rect x="9" y="9" width="6.500" height="5.500" fill="#e8e8e8" stroke="#9a9a9a" stroke-width=".7"/><rect x="9" y="18" width="6.500" height="5.500" fill="#e8e8e8" stroke="#9a9a9a" stroke-width=".7"/><path d="M8.500 9 L12 13.500 L19.500 5" stroke="#e01818" stroke-width="2.200" fill="none"/><path d="M8.500 18 L12 22.500 L19.500 14" stroke="#e01818" stroke-width="2.200" fill="none"/></svg>
<svg class="abs" style="left:1852px;top:309px" width="32" height="28" viewBox="0 0 32 28"><path d="M1 17 L16 24 L31 17 V20 L16 27.500 L1 20Z" fill="#9a9a9a"/><path d="M1 17 L16 10 L31 17 L16 24Z" fill="#d9d9d9"/><path d="M1 12 L16 19 L31 12 V16 L16 23 L1 16Z" fill="#7fbf9a"/><path d="M1 12 L16 5 L31 12 L16 19Z" fill="#a8dcc0"/><path d="M1 8 L16 15 L31 8 V11 L16 18 L1 11Z" fill="#2a68c8"/><path d="M1 8 L16 1 L31 8 L16 15Z" fill="#4f96ee"/></svg>
<div class="abs" style="left:1831px;top:383px;width:74px;height:43px;border:1px solid #cdcdcd;border-radius:3px;background:linear-gradient(180deg,#ffffff 0%,#f6f6f6 50%,#dcdcdc 100%)"></div>
<span class="t" style="left:1842.0px;top:391px;font-size:12px;letter-spacing:-0.07px;">Actualizar</span>
<span class="t" style="left:1840.5px;top:407px;font-size:12px;letter-spacing:-0.18px;">Gráfico 3D</span>
<!-- STATUS -->
<div class="abs" style="left:1444px;top:1020px;width:1px;height:19px;background:#d7d7d7"></div>
<div class="abs" style="left:1528px;top:1020px;width:1px;height:19px;background:#d7d7d7"></div>
<div class="abs" style="left:1599px;top:1020px;width:1px;height:19px;background:#d7d7d7"></div>
<div class="abs" style="left:1689px;top:1020px;width:1px;height:19px;background:#d7d7d7"></div>
<div class="abs" style="left:1769px;top:1020px;width:1px;height:19px;background:#d7d7d7"></div>
<span class="t" style="left:1449.0px;top:1024px;font-size:12px;letter-spacing:0.21px;">Longitud: m</span>
<span class="t" style="left:1534.0px;top:1024px;font-size:12px;letter-spacing:-0.37px;">Fuerza: kN</span>
<span class="t" style="left:1604.0px;top:1024px;font-size:12px;letter-spacing:-0.05px;">Masa: tonne</span>
<span class="t" style="left:1694.0px;top:1024px;font-size:12px;letter-spacing:-0.48px;">Esfuerzo: kPa</span>
<span class="t" style="left:1774.0px;top:1024px;font-size:12px;letter-spacing:-0.05px;">Aceleración: m/sec2</span>
<div class="abs" style="left:279px;top:1040px;width:57px;height:1px;background:#6b5a50"></div>
</body>
</html>
